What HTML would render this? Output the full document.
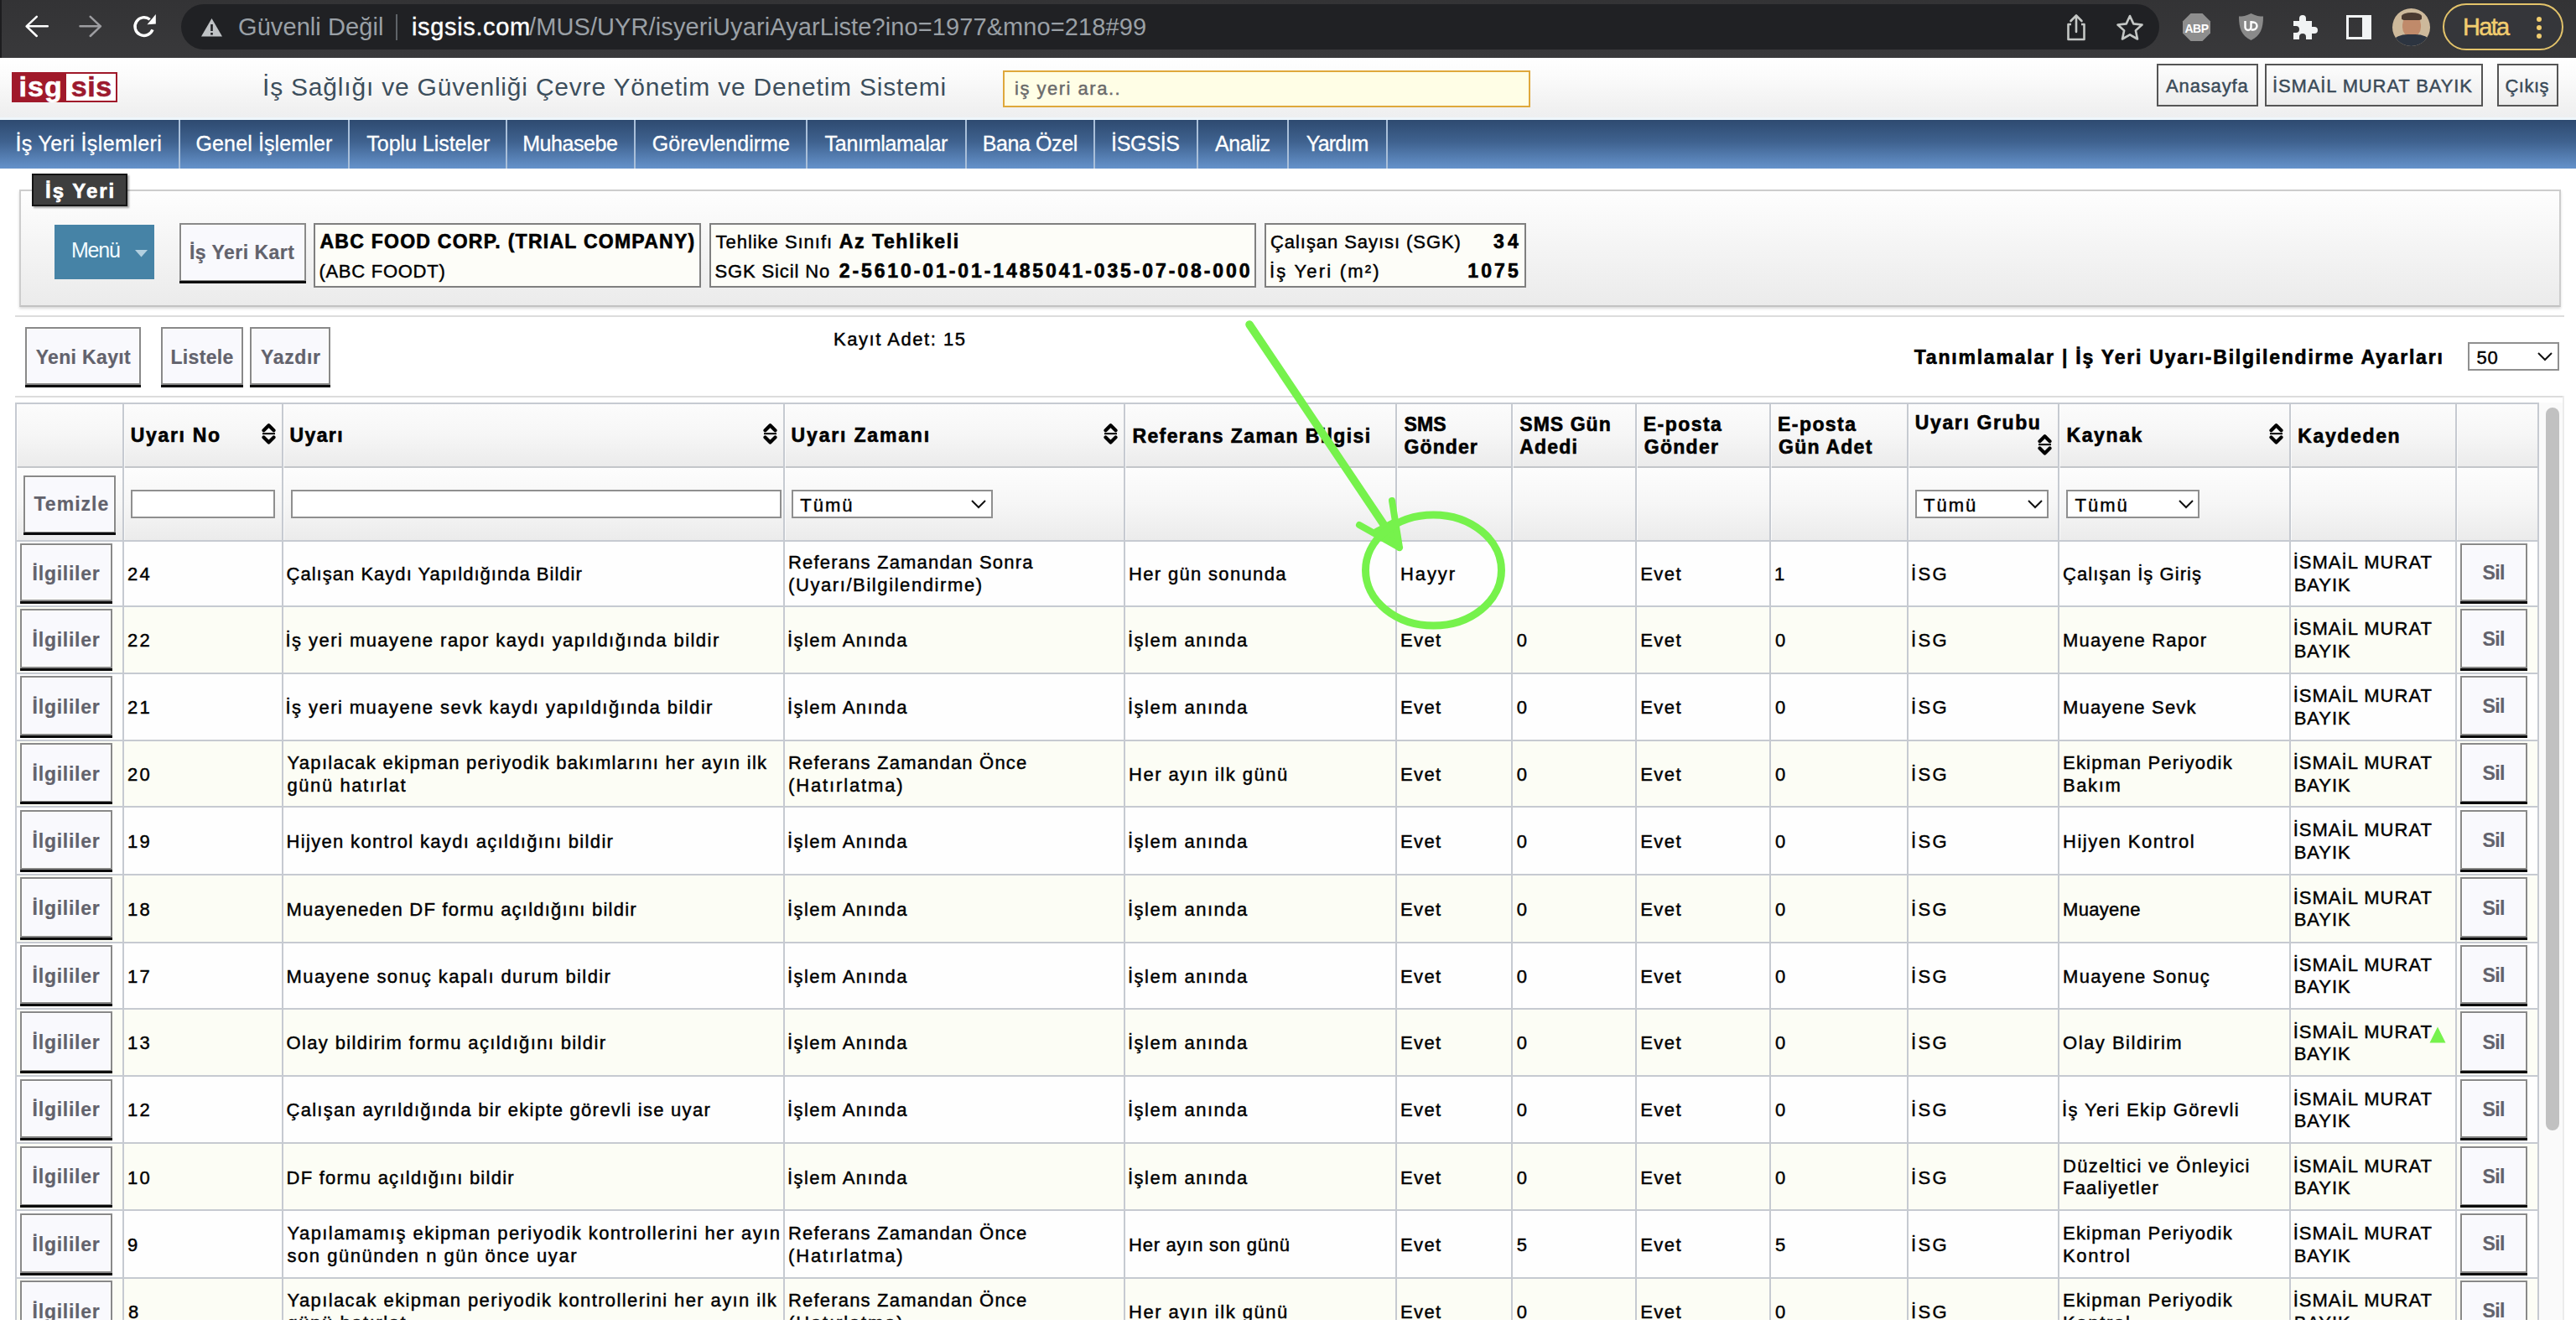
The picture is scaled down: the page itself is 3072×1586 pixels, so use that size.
<!DOCTYPE html>
<html><head><meta charset="utf-8"><title>isgsis</title>
<style>html,body{margin:0;padding:0;width:3072px;height:1586px;overflow:hidden;background:#fff;font-family:'Liberation Sans',sans-serif;}</style>
</head><body>
<div style="position:absolute;left:0px;top:0px;width:3072px;height:69px;background:linear-gradient(#333335,#39393b);"></div>
<div style="position:absolute;left:0px;top:0px;width:2px;height:69px;background:#1d1d1f;"></div>
<div style="position:absolute;left:216px;top:5px;width:2359px;height:54px;background:#202124;border-radius:27px;"></div>
<svg style="position:absolute;left:26px;top:14px" width="36" height="36" viewBox="0 0 36 36"><path d="M30.8 17.3H6M17.8 5.9L5.6 17.3l12.2 11.7" fill="none" stroke="#fff" stroke-width="2.5" stroke-linecap="round" stroke-linejoin="round"/></svg>
<svg style="position:absolute;left:90px;top:14px" width="36" height="36" viewBox="0 0 36 36"><path d="M5.5 17.3h24.5M17.7 5.9l12.2 11.4L17.7 29" fill="none" stroke="#9d9da1" stroke-width="2.5" stroke-linecap="round" stroke-linejoin="round"/></svg>
<svg style="position:absolute;left:154px;top:13px" width="36" height="36" viewBox="0 0 36 36"><path d="M24.7 10.3A10.8 10.8 0 1 0 27.95 22.3" fill="none" stroke="#fff" stroke-width="3.4"/><path d="M21.5 16.2L31.8 15.6 31.8 4z" fill="#fff"/></svg>
<svg style="position:absolute;left:239px;top:21px" width="27" height="23" viewBox="0 0 27 23"><path d="M13.5 1L26 22.5H1z" fill="#bfc2c5"/><rect x="12.2" y="8" width="2.6" height="8" fill="#202124"/><rect x="12.2" y="18" width="2.6" height="2.6" fill="#202124"/></svg>
<div style="position:absolute;left:284.00px;top:18.25px;font:29px/29px 'Liberation Sans', sans-serif;color:#9aa0a6;letter-spacing:0.081px;white-space:pre;">Güvenli Değil</div>
<div style="position:absolute;left:472px;top:17px;width:2px;height:31px;background:#5f6368;"></div>
<div style="position:absolute;left:491.00px;top:18.25px;font:29px/29px 'Liberation Sans', sans-serif;color:#ffffff;letter-spacing:0.644px;white-space:pre;-webkit-text-stroke:0.4px #fff;">isgsis.com</div>
<div style="position:absolute;left:631.00px;top:18.25px;font:29px/29px 'Liberation Sans', sans-serif;color:#9aa0a6;letter-spacing:0.101px;white-space:pre;">/MUS/UYR/isyeriUyariAyarListe?ino=1977&amp;mno=218#99</div>
<svg style="position:absolute;left:2460px;top:16px" width="32" height="34" viewBox="0 0 32 34"><path d="M10 13H6.5v18h19V13H22" fill="none" stroke="#c4c7c5" stroke-width="2.6" stroke-linejoin="round"/><path d="M16 22V3M9.5 9L16 2.5 22.5 9" fill="none" stroke="#c4c7c5" stroke-width="2.6" stroke-linecap="round" stroke-linejoin="round"/></svg>
<svg style="position:absolute;left:2522px;top:16px" width="36" height="34" viewBox="0 0 36 34"><path d="M18 3l4.3 9.4 10.2 1.1-7.6 6.9 2.1 10.1L18 25.4l-9 5.1 2.1-10.1-7.6-6.9 10.2-1.1z" fill="none" stroke="#c4c7c5" stroke-width="2.6" stroke-linejoin="round"/></svg>
<svg style="position:absolute;left:2602px;top:15px" width="35" height="35" viewBox="0 0 35 35"><path d="M10.5 1h14l9.5 9.5v14L24.5 34h-14L1 24.5v-14z" fill="#8e8e8e"/><text x="17.5" y="23.5" font-family="Liberation Sans" font-weight="bold" font-size="14" fill="#fff" text-anchor="middle" letter-spacing="-0.5">ABP</text></svg>
<svg style="position:absolute;left:2668px;top:15px" width="33" height="34" viewBox="0 0 33 34"><path d="M16.5 1C11 4 6 4.5 2 4.5c0 14 3 23 14.5 28.5C28 27.5 31 18.5 31 4.5 27 4.5 22 4 16.5 1z" fill="#8a8a8a"/><path d="M9.5 10v7.5a3.5 3.5 0 0 0 7 0V10" fill="none" stroke="#fff" stroke-width="2.4"/><path d="M16.5 11.5h2.5a4.5 4.5 0 0 1 0 9h-2.5" fill="none" stroke="#fff" stroke-width="2.4"/></svg>
<svg style="position:absolute;left:2732px;top:16px" width="33" height="32" viewBox="0 0 33 32"><path d="M3 9h7V6a4 4 0 0 1 8 0v3h7v7h3a4 4 0 0 1 0 8h-3v7H18v-3a4 4 0 0 0-8 0v3H3V23h3a4 4 0 0 0 0-8H3z" fill="#f1f3f4"/></svg>
<div style="position:absolute;left:2798px;top:18px;width:30px;height:29px;box-sizing:border-box;border:3px solid #f1f3f4;border-right-width:11px;"></div>
<div style="position:absolute;left:2853px;top:10px;width:45px;height:45px;border-radius:50%;overflow:hidden;background:#cdb99b;"><div style="position:absolute;left:12px;top:8px;width:22px;height:26px;border-radius:45%;background:#c08a6a;"></div><div style="position:absolute;left:11px;top:5px;width:24px;height:9px;border-radius:50% 50% 20% 20%;background:#4a3a30;"></div><div style="position:absolute;left:2px;top:31px;width:42px;height:20px;border-radius:40% 40% 0 0;background:#2c3440;"></div></div>
<div style="position:absolute;left:2913px;top:4px;width:144px;height:56px;box-sizing:border-box;border:2.5px solid #e3c36a;border-radius:28px;background:#35363a;"></div>
<div style="position:absolute;left:2937.00px;top:18.25px;font:29px/29px 'Liberation Sans', sans-serif;color:#f1cd6f;letter-spacing:-1.709px;white-space:pre;-webkit-text-stroke:0.5px #f1cd6f;">Hata</div>
<div style="position:absolute;left:3024.5px;top:19.5px;width:6.5px;height:6.5px;border-radius:50%;background:#f1cd6f;box-shadow:0 10px 0 #f1cd6f,0 20px 0 #f1cd6f"></div>
<div style="position:absolute;left:0px;top:69px;width:3072px;height:74px;background:linear-gradient(#ffffff 0%,#fbfbfb 30%,#f1f1f1 80%,#edeef0 100%);"></div>
<div style="position:absolute;left:0px;top:140px;width:3072px;height:3px;background:#eef6fb;"></div>
<div style="position:absolute;left:14px;top:86px;width:126px;height:35.599999999999994px;background:#a0192a;"></div>
<div style="position:absolute;left:79px;top:87.8px;width:59.400000000000006px;height:32.0px;background:#ffffff;"></div>
<div style="position:absolute;left:22.40px;top:85.52px;font:bold 34px/34px 'Liberation Sans', sans-serif;color:#ffffff;letter-spacing:1.122px;white-space:pre;-webkit-text-stroke:0.6px #ffffff;">isg</div>
<div style="position:absolute;left:84.80px;top:85.52px;font:bold 34px/34px 'Liberation Sans', sans-serif;color:#9c1a2e;letter-spacing:0.572px;white-space:pre;-webkit-text-stroke:0.6px #9c1a2e;">sis</div>
<div style="position:absolute;left:313.00px;top:89.41px;font:30px/30px 'Liberation Sans', sans-serif;color:#3c4e5c;letter-spacing:0.794px;white-space:pre;">İş Sağlığı ve Güvenliği Çevre Yönetim ve Denetim Sistemi</div>
<div style="position:absolute;left:1196px;top:84px;width:629px;height:44px;box-sizing:border-box;border:2px solid #dfa83c;background:#fffee6;"></div>
<div style="position:absolute;left:1210.00px;top:95.18px;font:22px/22px 'Liberation Sans', sans-serif;color:#6b6b6b;letter-spacing:1.502px;white-space:pre;-webkit-text-stroke:0.45px #6b6b6b;">iş yeri ara..</div>
<div style="position:absolute;left:2572px;top:76px;width:121px;height:51px;box-sizing:border-box;border:2px solid #555;background:linear-gradient(#fdfdfd,#ececec);"></div>
<div style="position:absolute;left:2583.00px;top:92.18px;font:22px/22px 'Liberation Sans', sans-serif;color:#3a4a58;letter-spacing:0.858px;white-space:pre;-webkit-text-stroke:0.45px #3a4a58;">Anasayfa</div>
<div style="position:absolute;left:2701px;top:76px;width:260px;height:51px;box-sizing:border-box;border:2px solid #555;background:linear-gradient(#fdfdfd,#ececec);"></div>
<div style="position:absolute;left:2710.00px;top:92.18px;font:22px/22px 'Liberation Sans', sans-serif;color:#3a4a58;letter-spacing:0.886px;white-space:pre;-webkit-text-stroke:0.45px #3a4a58;">İSMAİL MURAT BAYIK</div>
<div style="position:absolute;left:2978px;top:76px;width:73px;height:51px;box-sizing:border-box;border:2px solid #555;background:linear-gradient(#fdfdfd,#ececec);"></div>
<div style="position:absolute;left:2987.50px;top:92.18px;font:22px/22px 'Liberation Sans', sans-serif;color:#3a4a58;letter-spacing:0.472px;white-space:pre;-webkit-text-stroke:0.45px #3a4a58;">Çıkış</div>
<div style="position:absolute;left:0px;top:143px;width:3072px;height:58px;background:linear-gradient(#2e4a70 0%,#3f628f 45%,#6592cb 100%);"></div>
<div style="position:absolute;left:212.7px;top:143px;width:2.0px;height:58px;background:#a9bfd9;"></div>
<div style="position:absolute;left:415px;top:143px;width:2px;height:58px;background:#a9bfd9;"></div>
<div style="position:absolute;left:603px;top:143px;width:2px;height:58px;background:#a9bfd9;"></div>
<div style="position:absolute;left:756px;top:143px;width:2px;height:58px;background:#a9bfd9;"></div>
<div style="position:absolute;left:961px;top:143px;width:2px;height:58px;background:#a9bfd9;"></div>
<div style="position:absolute;left:1150.5px;top:143px;width:2.0px;height:58px;background:#a9bfd9;"></div>
<div style="position:absolute;left:1304px;top:143px;width:2px;height:58px;background:#a9bfd9;"></div>
<div style="position:absolute;left:1427px;top:143px;width:2px;height:58px;background:#a9bfd9;"></div>
<div style="position:absolute;left:1535px;top:143px;width:2px;height:58px;background:#a9bfd9;"></div>
<div style="position:absolute;left:1653px;top:143px;width:2px;height:58px;background:#a9bfd9;"></div>
<div style="position:absolute;left:18.40px;top:158.64px;font:25px/25px 'Liberation Sans', sans-serif;color:#ffffff;letter-spacing:0.387px;white-space:pre;-webkit-text-stroke:0.3px #fff;">İş Yeri İşlemleri</div>
<div style="position:absolute;left:233.50px;top:158.64px;font:25px/25px 'Liberation Sans', sans-serif;color:#ffffff;letter-spacing:0.127px;white-space:pre;-webkit-text-stroke:0.3px #fff;">Genel İşlemler</div>
<div style="position:absolute;left:437.30px;top:158.64px;font:25px/25px 'Liberation Sans', sans-serif;color:#ffffff;letter-spacing:-0.029px;white-space:pre;-webkit-text-stroke:0.3px #fff;">Toplu Listeler</div>
<div style="position:absolute;left:623.20px;top:158.64px;font:25px/25px 'Liberation Sans', sans-serif;color:#ffffff;letter-spacing:-0.435px;white-space:pre;-webkit-text-stroke:0.3px #fff;">Muhasebe</div>
<div style="position:absolute;left:777.80px;top:158.64px;font:25px/25px 'Liberation Sans', sans-serif;color:#ffffff;letter-spacing:0.004px;white-space:pre;-webkit-text-stroke:0.3px #fff;">Görevlendirme</div>
<div style="position:absolute;left:983.60px;top:158.64px;font:25px/25px 'Liberation Sans', sans-serif;color:#ffffff;letter-spacing:-0.293px;white-space:pre;-webkit-text-stroke:0.3px #fff;">Tanımlamalar</div>
<div style="position:absolute;left:1171.80px;top:158.64px;font:25px/25px 'Liberation Sans', sans-serif;color:#ffffff;letter-spacing:-0.410px;white-space:pre;-webkit-text-stroke:0.3px #fff;">Bana Özel</div>
<div style="position:absolute;left:1325.10px;top:158.64px;font:25px/25px 'Liberation Sans', sans-serif;color:#ffffff;letter-spacing:-0.297px;white-space:pre;-webkit-text-stroke:0.3px #fff;">İSGSİS</div>
<div style="position:absolute;left:1449.00px;top:158.64px;font:25px/25px 'Liberation Sans', sans-serif;color:#ffffff;letter-spacing:-0.398px;white-space:pre;-webkit-text-stroke:0.3px #fff;">Analiz</div>
<div style="position:absolute;left:1557.70px;top:158.64px;font:25px/25px 'Liberation Sans', sans-serif;color:#ffffff;letter-spacing:-0.820px;white-space:pre;-webkit-text-stroke:0.3px #fff;">Yardım</div>
<div style="position:absolute;left:23px;top:226px;width:3031px;height:140px;box-sizing:border-box;border:2px solid #cdcdcd;border-bottom-color:#c2c2c2;background:linear-gradient(#fefefe 0%,#f4f4f4 50%,#ebebeb 100%);box-shadow:0 2px 3px rgba(0,0,0,0.15);"></div>
<div style="position:absolute;left:38px;top:207px;width:114px;height:39px;box-sizing:border-box;border:2px solid #141414;background:#3e3e3e;box-shadow:2px 2px 2px rgba(0,0,0,0.35);"></div>
<div style="position:absolute;left:54.00px;top:215.78px;font:bold 24px/24px 'Liberation Sans', sans-serif;color:#ffffff;letter-spacing:1.991px;white-space:pre;-webkit-text-stroke:0.6px #ffffff;">İş Yeri</div>
<div style="position:absolute;left:65px;top:267.5px;width:119px;height:65.0px;background:#4683a6;"></div>
<div style="position:absolute;left:85.00px;top:286.14px;font:25px/25px 'Liberation Sans', sans-serif;color:#f2fbff;letter-spacing:-1.211px;white-space:pre;">Menü</div>
<svg style="position:absolute;left:160px;top:297px" width="17" height="10" viewBox="0 0 17 10"><path d="M1 1h15L8.5 9.5z" fill="#b3d0e0"/></svg>
<div style="position:absolute;left:214px;top:266px;width:150.5px;height:69.5px;box-sizing:border-box;border:2px solid #898989;background:#f9f9fd;box-shadow:inset 0 0 0 1px #ffffff;"></div>
<div style="position:absolute;left:214px;top:335px;width:150.5px;height:3px;background:#0b0b0b;"></div>
<div style="position:absolute;left:226.00px;top:289.93px;font:bold 23px/23px 'Liberation Sans', sans-serif;color:#62626c;letter-spacing:0.471px;white-space:pre;-webkit-text-stroke:0.6px #62626c;-webkit-text-stroke:0.2px #62626c;">İş Yeri Kart</div>
<div style="position:absolute;left:373.5px;top:266px;width:462.5px;height:77px;box-sizing:border-box;border:2px solid #7f7f7f;background:#fdfdf8;"></div>
<div style="position:absolute;left:381.40px;top:277.33px;font:bold 23px/23px 'Liberation Sans', sans-serif;color:#000;letter-spacing:1.265px;white-space:pre;-webkit-text-stroke:0.6px #000;">ABC FOOD CORP. (TRIAL COMPANY)</div>
<div style="position:absolute;left:380.40px;top:312.58px;font:22px/22px 'Liberation Sans', sans-serif;color:#000;letter-spacing:0.734px;white-space:pre;-webkit-text-stroke:0.45px #000;">(ABC FOODT)</div>
<div style="position:absolute;left:845.5px;top:266px;width:652.5px;height:77px;box-sizing:border-box;border:2px solid #7f7f7f;background:#fdfdf8;"></div>
<div style="position:absolute;left:853.50px;top:278.18px;font:22px/22px 'Liberation Sans', sans-serif;color:#000;letter-spacing:0.974px;white-space:pre;-webkit-text-stroke:0.45px #000;">Tehlike Sınıfı</div>
<div style="position:absolute;left:1000.70px;top:277.33px;font:bold 23px/23px 'Liberation Sans', sans-serif;color:#000;letter-spacing:1.597px;white-space:pre;-webkit-text-stroke:0.6px #000;">Az Tehlikeli</div>
<div style="position:absolute;left:852.50px;top:312.58px;font:22px/22px 'Liberation Sans', sans-serif;color:#000;letter-spacing:0.872px;white-space:pre;-webkit-text-stroke:0.45px #000;">SGK Sicil No</div>
<div style="position:absolute;left:1000.70px;top:311.73px;font:bold 23px/23px 'Liberation Sans', sans-serif;color:#000;letter-spacing:2.907px;white-space:pre;-webkit-text-stroke:0.6px #000;">2-5610-01-01-1485041-035-07-08-000</div>
<div style="position:absolute;left:1507.5px;top:266px;width:312.0px;height:77px;box-sizing:border-box;border:2px solid #7f7f7f;background:#fdfdf8;"></div>
<div style="position:absolute;left:1515.00px;top:278.18px;font:22px/22px 'Liberation Sans', sans-serif;color:#000;letter-spacing:0.940px;white-space:pre;-webkit-text-stroke:0.45px #000;">Çalışan Sayısı (SGK)</div>
<div style="position:absolute;left:1781.00px;top:277.33px;font:bold 23px/23px 'Liberation Sans', sans-serif;color:#000;letter-spacing:4.208px;white-space:pre;-webkit-text-stroke:0.6px #000;">34</div>
<div style="position:absolute;left:1514.00px;top:312.58px;font:22px/22px 'Liberation Sans', sans-serif;color:#000;letter-spacing:2.198px;white-space:pre;-webkit-text-stroke:0.45px #000;">İş Yeri (m²)</div>
<div style="position:absolute;left:1750.30px;top:311.73px;font:bold 23px/23px 'Liberation Sans', sans-serif;color:#000;letter-spacing:3.108px;white-space:pre;-webkit-text-stroke:0.6px #000;">1075</div>
<div style="position:absolute;left:18px;top:376px;width:3040px;height:2px;background:#dcdcdc;"></div>
<div style="position:absolute;left:30px;top:390px;width:138px;height:69.0px;box-sizing:border-box;border:2px solid #898989;background:#f9f9fd;box-shadow:inset 0 0 0 1px #ffffff;"></div>
<div style="position:absolute;left:30px;top:458.5px;width:138px;height:3.0px;background:#0b0b0b;"></div>
<div style="position:absolute;left:42.70px;top:414.73px;font:bold 23px/23px 'Liberation Sans', sans-serif;color:#62626c;letter-spacing:0.336px;white-space:pre;-webkit-text-stroke:0.6px #62626c;-webkit-text-stroke:0.2px #62626c;">Yeni Kayıt</div>
<div style="position:absolute;left:192px;top:390px;width:97.69999999999999px;height:69.0px;box-sizing:border-box;border:2px solid #898989;background:#f9f9fd;box-shadow:inset 0 0 0 1px #ffffff;"></div>
<div style="position:absolute;left:192px;top:458.5px;width:97.69999999999999px;height:3.0px;background:#0b0b0b;"></div>
<div style="position:absolute;left:203.50px;top:414.73px;font:bold 23px/23px 'Liberation Sans', sans-serif;color:#62626c;letter-spacing:0.321px;white-space:pre;-webkit-text-stroke:0.6px #62626c;-webkit-text-stroke:0.2px #62626c;">Listele</div>
<div style="position:absolute;left:298.3px;top:390px;width:96.19999999999999px;height:69.0px;box-sizing:border-box;border:2px solid #898989;background:#f9f9fd;box-shadow:inset 0 0 0 1px #ffffff;"></div>
<div style="position:absolute;left:298.3px;top:458.5px;width:96.19999999999999px;height:3.0px;background:#0b0b0b;"></div>
<div style="position:absolute;left:311.00px;top:414.73px;font:bold 23px/23px 'Liberation Sans', sans-serif;color:#62626c;letter-spacing:0.639px;white-space:pre;-webkit-text-stroke:0.6px #62626c;-webkit-text-stroke:0.2px #62626c;">Yazdır</div>
<div style="position:absolute;left:994.00px;top:393.88px;font:22px/22px 'Liberation Sans', sans-serif;color:#000;letter-spacing:1.541px;white-space:pre;-webkit-text-stroke:0.45px #000;">Kayıt Adet: 15</div>
<div style="position:absolute;left:2282.70px;top:415.33px;font:bold 23px/23px 'Liberation Sans', sans-serif;color:#000;letter-spacing:1.787px;white-space:pre;-webkit-text-stroke:0.6px #000;">Tanımlamalar | İş Yeri Uyarı-Bilgilendirme Ayarları</div>
<div style="position:absolute;left:2942.5px;top:408.3px;width:109.0px;height:33.69999999999999px;box-sizing:border-box;border:2px solid #8f8f8f;background:#fff;"></div>
<div style="position:absolute;left:2953.60px;top:416.18px;font:22px/22px 'Liberation Sans', sans-serif;color:#000;letter-spacing:0.765px;white-space:pre;-webkit-text-stroke:0.45px #000;">50</div>
<svg style="position:absolute;left:3025px;top:419px" width="20" height="12" viewBox="0 0 20 12"><path d="M2 2l8 8 8-8" fill="none" stroke="#111" stroke-width="2"/></svg>
<div style="position:absolute;left:18px;top:472px;width:3040px;height:2px;background:#dcdcdc;"></div>
<div style="position:absolute;left:0;top:0;width:3072px;height:1574px;overflow:hidden;">
<div style="position:absolute;left:19px;top:480.7px;width:3007.5px;height:76.30000000000001px;background:linear-gradient(#fcfcfc 0%,#f6f6f6 50%,#ebebeb 100%);"></div>
<div style="position:absolute;left:19px;top:557px;width:3007.5px;height:87.60000000000002px;background:linear-gradient(#fdfdfd 0%,#f6f6f6 50%,#ebebeb 100%);"></div>
<div style="position:absolute;left:19px;top:644.6px;width:3007.5px;height:77.89999999999998px;background:#fefefe;"></div>
<div style="position:absolute;left:19px;top:722.5px;width:3007.5px;height:80.20000000000005px;background:#fcfdf5;"></div>
<div style="position:absolute;left:19px;top:802.7px;width:3007.5px;height:79.79999999999995px;background:#fefefe;"></div>
<div style="position:absolute;left:19px;top:882.5px;width:3007.5px;height:79.89999999999998px;background:#fcfdf5;"></div>
<div style="position:absolute;left:19px;top:962.4px;width:3007.5px;height:80.39999999999998px;background:#fefefe;"></div>
<div style="position:absolute;left:19px;top:1042.8px;width:3007.5px;height:80.70000000000005px;background:#fcfdf5;"></div>
<div style="position:absolute;left:19px;top:1123.5px;width:3007.5px;height:79.40000000000009px;background:#fefefe;"></div>
<div style="position:absolute;left:19px;top:1202.9px;width:3007.5px;height:80.29999999999995px;background:#fcfdf5;"></div>
<div style="position:absolute;left:19px;top:1283.2px;width:3007.5px;height:79.79999999999995px;background:#fefefe;"></div>
<div style="position:absolute;left:19px;top:1363px;width:3007.5px;height:80.29999999999995px;background:#fcfdf5;"></div>
<div style="position:absolute;left:19px;top:1443.3px;width:3007.5px;height:80.29999999999995px;background:#fefefe;"></div>
<div style="position:absolute;left:19px;top:1523.6px;width:3007.5px;height:80.10000000000014px;background:#fcfdf5;"></div>
<div style="position:absolute;left:18px;top:479.7px;width:3009.5px;height:2.0px;background:#c6cad1;"></div>
<div style="position:absolute;left:18px;top:556px;width:3009.5px;height:2px;background:#c3c6ca;"></div>
<div style="position:absolute;left:18px;top:643.6px;width:3009.5px;height:2.0px;background:#c6cad1;"></div>
<div style="position:absolute;left:18px;top:721.5px;width:3009.5px;height:2.0px;background:#c6cad1;"></div>
<div style="position:absolute;left:18px;top:801.7px;width:3009.5px;height:2.0px;background:#c6cad1;"></div>
<div style="position:absolute;left:18px;top:881.5px;width:3009.5px;height:2.0px;background:#c6cad1;"></div>
<div style="position:absolute;left:18px;top:961.4px;width:3009.5px;height:2.0px;background:#c6cad1;"></div>
<div style="position:absolute;left:18px;top:1041.8px;width:3009.5px;height:2.0px;background:#c6cad1;"></div>
<div style="position:absolute;left:18px;top:1122.5px;width:3009.5px;height:2.0px;background:#c6cad1;"></div>
<div style="position:absolute;left:18px;top:1201.9px;width:3009.5px;height:2.0px;background:#c6cad1;"></div>
<div style="position:absolute;left:18px;top:1282.2px;width:3009.5px;height:2.0px;background:#c6cad1;"></div>
<div style="position:absolute;left:18px;top:1362px;width:3009.5px;height:2px;background:#c6cad1;"></div>
<div style="position:absolute;left:18px;top:1442.3px;width:3009.5px;height:2.0px;background:#c6cad1;"></div>
<div style="position:absolute;left:18px;top:1522.6px;width:3009.5px;height:2.0px;background:#c6cad1;"></div>
<div style="position:absolute;left:18px;top:1602.7px;width:3009.5px;height:2.0px;background:#c6cad1;"></div>
<div style="position:absolute;left:18px;top:479.7px;width:2px;height:1094.3px;background:#c6cad1;"></div>
<div style="position:absolute;left:146px;top:479.7px;width:2px;height:1094.3px;background:#c6cad1;"></div>
<div style="position:absolute;left:335.5px;top:479.7px;width:2.0px;height:1094.3px;background:#c6cad1;"></div>
<div style="position:absolute;left:934px;top:479.7px;width:2px;height:1094.3px;background:#c6cad1;"></div>
<div style="position:absolute;left:1340px;top:479.7px;width:2px;height:1094.3px;background:#c6cad1;"></div>
<div style="position:absolute;left:1663.5px;top:479.7px;width:2.0px;height:1094.3px;background:#c6cad1;"></div>
<div style="position:absolute;left:1802px;top:479.7px;width:2px;height:1094.3px;background:#c6cad1;"></div>
<div style="position:absolute;left:1950px;top:479.7px;width:2px;height:1094.3px;background:#c6cad1;"></div>
<div style="position:absolute;left:2110px;top:479.7px;width:2px;height:1094.3px;background:#c6cad1;"></div>
<div style="position:absolute;left:2274px;top:479.7px;width:2px;height:1094.3px;background:#c6cad1;"></div>
<div style="position:absolute;left:2454px;top:479.7px;width:2px;height:1094.3px;background:#c6cad1;"></div>
<div style="position:absolute;left:2730px;top:479.7px;width:2px;height:1094.3px;background:#c6cad1;"></div>
<div style="position:absolute;left:2927.5px;top:479.7px;width:2.0px;height:1094.3px;background:#c6cad1;"></div>
<div style="position:absolute;left:3025.5px;top:479.7px;width:2.0px;height:1094.3px;background:#c6cad1;"></div>
<div style="position:absolute;left:20px;top:481.7px;width:1px;height:161.90000000000003px;background:rgba(255,255,255,0.7);"></div>
<div style="position:absolute;left:148px;top:481.7px;width:1px;height:161.90000000000003px;background:rgba(255,255,255,0.7);"></div>
<div style="position:absolute;left:337.5px;top:481.7px;width:1.0px;height:161.90000000000003px;background:rgba(255,255,255,0.7);"></div>
<div style="position:absolute;left:936px;top:481.7px;width:1px;height:161.90000000000003px;background:rgba(255,255,255,0.7);"></div>
<div style="position:absolute;left:1342px;top:481.7px;width:1px;height:161.90000000000003px;background:rgba(255,255,255,0.7);"></div>
<div style="position:absolute;left:1665.5px;top:481.7px;width:1.0px;height:161.90000000000003px;background:rgba(255,255,255,0.7);"></div>
<div style="position:absolute;left:1804px;top:481.7px;width:1px;height:161.90000000000003px;background:rgba(255,255,255,0.7);"></div>
<div style="position:absolute;left:1952px;top:481.7px;width:1px;height:161.90000000000003px;background:rgba(255,255,255,0.7);"></div>
<div style="position:absolute;left:2112px;top:481.7px;width:1px;height:161.90000000000003px;background:rgba(255,255,255,0.7);"></div>
<div style="position:absolute;left:2276px;top:481.7px;width:1px;height:161.90000000000003px;background:rgba(255,255,255,0.7);"></div>
<div style="position:absolute;left:2456px;top:481.7px;width:1px;height:161.90000000000003px;background:rgba(255,255,255,0.7);"></div>
<div style="position:absolute;left:2732px;top:481.7px;width:1px;height:161.90000000000003px;background:rgba(255,255,255,0.7);"></div>
<div style="position:absolute;left:2929.5px;top:481.7px;width:1.0px;height:161.90000000000003px;background:rgba(255,255,255,0.7);"></div>
<div style="position:absolute;left:155.80px;top:507.63px;font:bold 23px/23px 'Liberation Sans', sans-serif;color:#000;letter-spacing:1.667px;white-space:pre;-webkit-text-stroke:0.6px #000;">Uyarı No</div>
<svg style="position:absolute;left:312px;top:504px" width="17" height="27" viewBox="0 0 17 27"><path d="M2.5 9.2L8.5 3.2l6 6" fill="none" stroke="#000" stroke-width="4.2" stroke-linecap="round" stroke-linejoin="round"/><rect x="1" y="12" width="15" height="2.2" fill="#1a1a1a"/><path d="M2.5 17.6l6 6 6-6" fill="none" stroke="#000" stroke-width="4.2" stroke-linecap="round" stroke-linejoin="round"/></svg>
<div style="position:absolute;left:345.50px;top:507.63px;font:bold 23px/23px 'Liberation Sans', sans-serif;color:#000;letter-spacing:1.381px;white-space:pre;-webkit-text-stroke:0.6px #000;">Uyarı</div>
<svg style="position:absolute;left:910px;top:504px" width="17" height="27" viewBox="0 0 17 27"><path d="M2.5 9.2L8.5 3.2l6 6" fill="none" stroke="#000" stroke-width="4.2" stroke-linecap="round" stroke-linejoin="round"/><rect x="1" y="12" width="15" height="2.2" fill="#1a1a1a"/><path d="M2.5 17.6l6 6 6-6" fill="none" stroke="#000" stroke-width="4.2" stroke-linecap="round" stroke-linejoin="round"/></svg>
<div style="position:absolute;left:943.60px;top:507.63px;font:bold 23px/23px 'Liberation Sans', sans-serif;color:#000;letter-spacing:1.822px;white-space:pre;-webkit-text-stroke:0.6px #000;">Uyarı Zamanı</div>
<svg style="position:absolute;left:1316px;top:504px" width="17" height="27" viewBox="0 0 17 27"><path d="M2.5 9.2L8.5 3.2l6 6" fill="none" stroke="#000" stroke-width="4.2" stroke-linecap="round" stroke-linejoin="round"/><rect x="1" y="12" width="15" height="2.2" fill="#1a1a1a"/><path d="M2.5 17.6l6 6 6-6" fill="none" stroke="#000" stroke-width="4.2" stroke-linecap="round" stroke-linejoin="round"/></svg>
<div style="position:absolute;left:1350.40px;top:508.93px;font:bold 23px/23px 'Liberation Sans', sans-serif;color:#000;letter-spacing:1.401px;white-space:pre;-webkit-text-stroke:0.6px #000;">Referans Zaman Bilgisi</div>
<div style="position:absolute;left:1674.50px;top:495.03px;font:bold 23px/23px 'Liberation Sans', sans-serif;color:#000;letter-spacing:0.174px;white-space:pre;-webkit-text-stroke:0.6px #000;">SMS</div>
<div style="position:absolute;left:1674.50px;top:522.13px;font:bold 23px/23px 'Liberation Sans', sans-serif;color:#000;letter-spacing:1.097px;white-space:pre;-webkit-text-stroke:0.6px #000;">Gönder</div>
<div style="position:absolute;left:1812.30px;top:495.03px;font:bold 23px/23px 'Liberation Sans', sans-serif;color:#000;letter-spacing:1.038px;white-space:pre;-webkit-text-stroke:0.6px #000;">SMS Gün</div>
<div style="position:absolute;left:1812.30px;top:522.13px;font:bold 23px/23px 'Liberation Sans', sans-serif;color:#000;letter-spacing:1.178px;white-space:pre;-webkit-text-stroke:0.6px #000;">Adedi</div>
<div style="position:absolute;left:1959.80px;top:495.03px;font:bold 23px/23px 'Liberation Sans', sans-serif;color:#000;letter-spacing:1.442px;white-space:pre;-webkit-text-stroke:0.6px #000;">E-posta</div>
<div style="position:absolute;left:1960.80px;top:522.13px;font:bold 23px/23px 'Liberation Sans', sans-serif;color:#000;letter-spacing:1.274px;white-space:pre;-webkit-text-stroke:0.6px #000;">Gönder</div>
<div style="position:absolute;left:2120.00px;top:495.03px;font:bold 23px/23px 'Liberation Sans', sans-serif;color:#000;letter-spacing:1.442px;white-space:pre;-webkit-text-stroke:0.6px #000;">E-posta</div>
<div style="position:absolute;left:2121.00px;top:522.13px;font:bold 23px/23px 'Liberation Sans', sans-serif;color:#000;letter-spacing:1.239px;white-space:pre;-webkit-text-stroke:0.6px #000;">Gün Adet</div>
<div style="position:absolute;left:2283.80px;top:493.03px;font:bold 23px/23px 'Liberation Sans', sans-serif;color:#000;letter-spacing:1.614px;white-space:pre;-webkit-text-stroke:0.6px #000;">Uyarı Grubu</div>
<svg style="position:absolute;left:2430px;top:517px" width="17" height="27" viewBox="0 0 17 27"><path d="M2.5 9.2L8.5 3.2l6 6" fill="none" stroke="#000" stroke-width="4.2" stroke-linecap="round" stroke-linejoin="round"/><rect x="1" y="12" width="15" height="2.2" fill="#1a1a1a"/><path d="M2.5 17.6l6 6 6-6" fill="none" stroke="#000" stroke-width="4.2" stroke-linecap="round" stroke-linejoin="round"/></svg>
<div style="position:absolute;left:2464.40px;top:507.63px;font:bold 23px/23px 'Liberation Sans', sans-serif;color:#000;letter-spacing:1.633px;white-space:pre;-webkit-text-stroke:0.6px #000;">Kaynak</div>
<svg style="position:absolute;left:2706px;top:504px" width="17" height="27" viewBox="0 0 17 27"><path d="M2.5 9.2L8.5 3.2l6 6" fill="none" stroke="#000" stroke-width="4.2" stroke-linecap="round" stroke-linejoin="round"/><rect x="1" y="12" width="15" height="2.2" fill="#1a1a1a"/><path d="M2.5 17.6l6 6 6-6" fill="none" stroke="#000" stroke-width="4.2" stroke-linecap="round" stroke-linejoin="round"/></svg>
<div style="position:absolute;left:2740.20px;top:509.33px;font:bold 23px/23px 'Liberation Sans', sans-serif;color:#000;letter-spacing:1.646px;white-space:pre;-webkit-text-stroke:0.6px #000;">Kaydeden</div>
<div style="position:absolute;left:28px;top:566.5px;width:110px;height:69.0px;box-sizing:border-box;border:2px solid #898989;background:#f9f9fd;box-shadow:inset 0 0 0 1px #ffffff;"></div>
<div style="position:absolute;left:28px;top:635px;width:110px;height:3px;background:#0b0b0b;"></div>
<div style="position:absolute;left:40.50px;top:590.33px;font:bold 23px/23px 'Liberation Sans', sans-serif;color:#62626c;letter-spacing:1.023px;white-space:pre;-webkit-text-stroke:0.6px #62626c;-webkit-text-stroke:0.2px #62626c;">Temizle</div>
<div style="position:absolute;left:156px;top:583.8px;width:172px;height:34.700000000000045px;box-sizing:border-box;border:2px solid #8f8f8f;background:#fff;"></div>
<div style="position:absolute;left:346.5px;top:583.8px;width:585.0px;height:34.700000000000045px;box-sizing:border-box;border:2px solid #8f8f8f;background:#fff;"></div>
<div style="position:absolute;left:944.3px;top:583.8px;width:239.70000000000005px;height:34.700000000000045px;box-sizing:border-box;border:2px solid #8f8f8f;background:#fff;"></div>
<div style="position:absolute;left:954.30px;top:592.18px;font:22px/22px 'Liberation Sans', sans-serif;color:#000;letter-spacing:2.000px;white-space:pre;-webkit-text-stroke:0.45px #000;">Tümü</div>
<svg style="position:absolute;left:1157px;top:595px" width="20" height="12" viewBox="0 0 20 12"><path d="M2 2l8 8 8-8" fill="none" stroke="#111" stroke-width="2"/></svg>
<div style="position:absolute;left:2284.3px;top:583.8px;width:159.19999999999982px;height:34.700000000000045px;box-sizing:border-box;border:2px solid #8f8f8f;background:#fff;"></div>
<div style="position:absolute;left:2294.00px;top:592.18px;font:22px/22px 'Liberation Sans', sans-serif;color:#000;letter-spacing:2.000px;white-space:pre;-webkit-text-stroke:0.45px #000;">Tümü</div>
<svg style="position:absolute;left:2416.5px;top:595px" width="20" height="12" viewBox="0 0 20 12"><path d="M2 2l8 8 8-8" fill="none" stroke="#111" stroke-width="2"/></svg>
<div style="position:absolute;left:2464.2px;top:583.8px;width:159.30000000000018px;height:34.700000000000045px;box-sizing:border-box;border:2px solid #8f8f8f;background:#fff;"></div>
<div style="position:absolute;left:2474.50px;top:592.18px;font:22px/22px 'Liberation Sans', sans-serif;color:#000;letter-spacing:2.000px;white-space:pre;-webkit-text-stroke:0.45px #000;">Tümü</div>
<svg style="position:absolute;left:2596.5px;top:595px" width="20" height="12" viewBox="0 0 20 12"><path d="M2 2l8 8 8-8" fill="none" stroke="#111" stroke-width="2"/></svg>
<div style="position:absolute;left:24px;top:648.1px;width:109.5px;height:68.89999999999998px;box-sizing:border-box;border:2px solid #898989;background:#f9f9fd;box-shadow:inset 0 0 0 1px #ffffff;"></div>
<div style="position:absolute;left:24px;top:716.5px;width:109.5px;height:3.0px;background:#0b0b0b;"></div>
<div style="position:absolute;left:38.60px;top:672.88px;font:bold 23px/23px 'Liberation Sans', sans-serif;color:#62626c;letter-spacing:0.752px;white-space:pre;-webkit-text-stroke:0.6px #62626c;-webkit-text-stroke:0.2px #62626c;">İlgililer</div>
<div style="position:absolute;left:152.00px;top:673.93px;font:22px/22px 'Liberation Sans', sans-serif;color:#000;letter-spacing:2.365px;white-space:pre;-webkit-text-stroke:0.45px #000;">24</div>
<div style="position:absolute;left:341.50px;top:673.93px;font:22px/22px 'Liberation Sans', sans-serif;color:#000;letter-spacing:1.023px;white-space:pre;-webkit-text-stroke:0.45px #000;">Çalışan Kaydı Yapıldığında Bildir</div>
<div style="position:absolute;left:940.00px;top:660.23px;font:22px/22px 'Liberation Sans', sans-serif;color:#000;letter-spacing:1.185px;white-space:pre;-webkit-text-stroke:0.45px #000;">Referans Zamandan Sonra</div>
<div style="position:absolute;left:940.00px;top:686.73px;font:22px/22px 'Liberation Sans', sans-serif;color:#000;letter-spacing:1.588px;white-space:pre;-webkit-text-stroke:0.45px #000;">(Uyarı/Bilgilendirme)</div>
<div style="position:absolute;left:1346.00px;top:673.93px;font:22px/22px 'Liberation Sans', sans-serif;color:#000;letter-spacing:1.332px;white-space:pre;-webkit-text-stroke:0.45px #000;">Her gün sonunda</div>
<div style="position:absolute;left:1670.00px;top:673.93px;font:22px/22px 'Liberation Sans', sans-serif;color:#000;letter-spacing:1.894px;white-space:pre;-webkit-text-stroke:0.45px #000;">Hayyr</div>
<div style="position:absolute;left:1956.30px;top:673.93px;font:22px/22px 'Liberation Sans', sans-serif;color:#000;letter-spacing:1.397px;white-space:pre;-webkit-text-stroke:0.45px #000;">Evet</div>
<div style="position:absolute;left:2116.00px;top:673.93px;font:22px/22px 'Liberation Sans', sans-serif;color:#000;letter-spacing:0.768px;white-space:pre;-webkit-text-stroke:0.45px #000;">1</div>
<div style="position:absolute;left:2279.00px;top:673.93px;font:22px/22px 'Liberation Sans', sans-serif;color:#000;letter-spacing:2.407px;white-space:pre;-webkit-text-stroke:0.45px #000;">İSG</div>
<div style="position:absolute;left:2460.00px;top:673.93px;font:22px/22px 'Liberation Sans', sans-serif;color:#000;letter-spacing:1.057px;white-space:pre;-webkit-text-stroke:0.45px #000;">Çalışan İş Giriş</div>
<div style="position:absolute;left:2734.70px;top:660.23px;font:22px/22px 'Liberation Sans', sans-serif;color:#000;letter-spacing:1.019px;white-space:pre;-webkit-text-stroke:0.45px #000;">İSMAİL MURAT</div>
<div style="position:absolute;left:2735.70px;top:686.73px;font:22px/22px 'Liberation Sans', sans-serif;color:#000;letter-spacing:0.975px;white-space:pre;-webkit-text-stroke:0.45px #000;">BAYIK</div>
<div style="position:absolute;left:2934px;top:648.1px;width:79.5px;height:68.89999999999998px;box-sizing:border-box;border:2px solid #898989;background:#f9f9fd;box-shadow:inset 0 0 0 1px #ffffff;"></div>
<div style="position:absolute;left:2934px;top:716.5px;width:79.5px;height:3.0px;background:#0b0b0b;"></div>
<div style="position:absolute;left:2960.60px;top:672.38px;font:bold 23px/23px 'Liberation Sans', sans-serif;color:#62626c;letter-spacing:-0.665px;white-space:pre;-webkit-text-stroke:0.6px #62626c;-webkit-text-stroke:0.2px #62626c;">Sil</div>
<div style="position:absolute;left:24px;top:726.0px;width:109.5px;height:71.20000000000005px;box-sizing:border-box;border:2px solid #898989;background:#f9f9fd;box-shadow:inset 0 0 0 1px #ffffff;"></div>
<div style="position:absolute;left:24px;top:796.7px;width:109.5px;height:3.0px;background:#0b0b0b;"></div>
<div style="position:absolute;left:38.60px;top:751.93px;font:bold 23px/23px 'Liberation Sans', sans-serif;color:#62626c;letter-spacing:0.752px;white-space:pre;-webkit-text-stroke:0.6px #62626c;-webkit-text-stroke:0.2px #62626c;">İlgililer</div>
<div style="position:absolute;left:152.00px;top:752.98px;font:22px/22px 'Liberation Sans', sans-serif;color:#000;letter-spacing:2.365px;white-space:pre;-webkit-text-stroke:0.45px #000;">22</div>
<div style="position:absolute;left:340.50px;top:752.98px;font:22px/22px 'Liberation Sans', sans-serif;color:#000;letter-spacing:1.450px;white-space:pre;-webkit-text-stroke:0.45px #000;">İş yeri muayene rapor kaydı yapıldığında bildir</div>
<div style="position:absolute;left:939.00px;top:752.98px;font:22px/22px 'Liberation Sans', sans-serif;color:#000;letter-spacing:1.385px;white-space:pre;-webkit-text-stroke:0.45px #000;">İşlem Anında</div>
<div style="position:absolute;left:1345.00px;top:752.98px;font:22px/22px 'Liberation Sans', sans-serif;color:#000;letter-spacing:1.479px;white-space:pre;-webkit-text-stroke:0.45px #000;">İşlem anında</div>
<div style="position:absolute;left:1670.00px;top:752.98px;font:22px/22px 'Liberation Sans', sans-serif;color:#000;letter-spacing:1.397px;white-space:pre;-webkit-text-stroke:0.45px #000;">Evet</div>
<div style="position:absolute;left:1808.70px;top:752.98px;font:22px/22px 'Liberation Sans', sans-serif;color:#000;letter-spacing:0.650px;white-space:pre;-webkit-text-stroke:0.45px #000;">0</div>
<div style="position:absolute;left:1956.30px;top:752.98px;font:22px/22px 'Liberation Sans', sans-serif;color:#000;letter-spacing:1.397px;white-space:pre;-webkit-text-stroke:0.45px #000;">Evet</div>
<div style="position:absolute;left:2117.00px;top:752.98px;font:22px/22px 'Liberation Sans', sans-serif;color:#000;letter-spacing:0.650px;white-space:pre;-webkit-text-stroke:0.45px #000;">0</div>
<div style="position:absolute;left:2279.00px;top:752.98px;font:22px/22px 'Liberation Sans', sans-serif;color:#000;letter-spacing:2.407px;white-space:pre;-webkit-text-stroke:0.45px #000;">İSG</div>
<div style="position:absolute;left:2460.00px;top:752.98px;font:22px/22px 'Liberation Sans', sans-serif;color:#000;letter-spacing:1.208px;white-space:pre;-webkit-text-stroke:0.45px #000;">Muayene Rapor</div>
<div style="position:absolute;left:2734.70px;top:739.28px;font:22px/22px 'Liberation Sans', sans-serif;color:#000;letter-spacing:1.019px;white-space:pre;-webkit-text-stroke:0.45px #000;">İSMAİL MURAT</div>
<div style="position:absolute;left:2735.70px;top:765.78px;font:22px/22px 'Liberation Sans', sans-serif;color:#000;letter-spacing:0.975px;white-space:pre;-webkit-text-stroke:0.45px #000;">BAYIK</div>
<div style="position:absolute;left:2934px;top:726.0px;width:79.5px;height:71.20000000000005px;box-sizing:border-box;border:2px solid #898989;background:#f9f9fd;box-shadow:inset 0 0 0 1px #ffffff;"></div>
<div style="position:absolute;left:2934px;top:796.7px;width:79.5px;height:3.0px;background:#0b0b0b;"></div>
<div style="position:absolute;left:2960.60px;top:751.43px;font:bold 23px/23px 'Liberation Sans', sans-serif;color:#62626c;letter-spacing:-0.665px;white-space:pre;-webkit-text-stroke:0.6px #62626c;-webkit-text-stroke:0.2px #62626c;">Sil</div>
<div style="position:absolute;left:24px;top:806.2px;width:109.5px;height:70.79999999999995px;box-sizing:border-box;border:2px solid #898989;background:#f9f9fd;box-shadow:inset 0 0 0 1px #ffffff;"></div>
<div style="position:absolute;left:24px;top:876.5px;width:109.5px;height:3.0px;background:#0b0b0b;"></div>
<div style="position:absolute;left:38.60px;top:831.93px;font:bold 23px/23px 'Liberation Sans', sans-serif;color:#62626c;letter-spacing:0.752px;white-space:pre;-webkit-text-stroke:0.6px #62626c;-webkit-text-stroke:0.2px #62626c;">İlgililer</div>
<div style="position:absolute;left:152.00px;top:832.98px;font:22px/22px 'Liberation Sans', sans-serif;color:#000;letter-spacing:2.365px;white-space:pre;-webkit-text-stroke:0.45px #000;">21</div>
<div style="position:absolute;left:340.50px;top:832.98px;font:22px/22px 'Liberation Sans', sans-serif;color:#000;letter-spacing:1.445px;white-space:pre;-webkit-text-stroke:0.45px #000;">İş yeri muayene sevk kaydı yapıldığında bildir</div>
<div style="position:absolute;left:939.00px;top:832.98px;font:22px/22px 'Liberation Sans', sans-serif;color:#000;letter-spacing:1.385px;white-space:pre;-webkit-text-stroke:0.45px #000;">İşlem Anında</div>
<div style="position:absolute;left:1345.00px;top:832.98px;font:22px/22px 'Liberation Sans', sans-serif;color:#000;letter-spacing:1.479px;white-space:pre;-webkit-text-stroke:0.45px #000;">İşlem anında</div>
<div style="position:absolute;left:1670.00px;top:832.98px;font:22px/22px 'Liberation Sans', sans-serif;color:#000;letter-spacing:1.397px;white-space:pre;-webkit-text-stroke:0.45px #000;">Evet</div>
<div style="position:absolute;left:1808.70px;top:832.98px;font:22px/22px 'Liberation Sans', sans-serif;color:#000;letter-spacing:0.650px;white-space:pre;-webkit-text-stroke:0.45px #000;">0</div>
<div style="position:absolute;left:1956.30px;top:832.98px;font:22px/22px 'Liberation Sans', sans-serif;color:#000;letter-spacing:1.397px;white-space:pre;-webkit-text-stroke:0.45px #000;">Evet</div>
<div style="position:absolute;left:2117.00px;top:832.98px;font:22px/22px 'Liberation Sans', sans-serif;color:#000;letter-spacing:0.650px;white-space:pre;-webkit-text-stroke:0.45px #000;">0</div>
<div style="position:absolute;left:2279.00px;top:832.98px;font:22px/22px 'Liberation Sans', sans-serif;color:#000;letter-spacing:2.407px;white-space:pre;-webkit-text-stroke:0.45px #000;">İSG</div>
<div style="position:absolute;left:2460.00px;top:832.98px;font:22px/22px 'Liberation Sans', sans-serif;color:#000;letter-spacing:1.180px;white-space:pre;-webkit-text-stroke:0.45px #000;">Muayene Sevk</div>
<div style="position:absolute;left:2734.70px;top:819.28px;font:22px/22px 'Liberation Sans', sans-serif;color:#000;letter-spacing:1.019px;white-space:pre;-webkit-text-stroke:0.45px #000;">İSMAİL MURAT</div>
<div style="position:absolute;left:2735.70px;top:845.78px;font:22px/22px 'Liberation Sans', sans-serif;color:#000;letter-spacing:0.975px;white-space:pre;-webkit-text-stroke:0.45px #000;">BAYIK</div>
<div style="position:absolute;left:2934px;top:806.2px;width:79.5px;height:70.79999999999995px;box-sizing:border-box;border:2px solid #898989;background:#f9f9fd;box-shadow:inset 0 0 0 1px #ffffff;"></div>
<div style="position:absolute;left:2934px;top:876.5px;width:79.5px;height:3.0px;background:#0b0b0b;"></div>
<div style="position:absolute;left:2960.60px;top:831.43px;font:bold 23px/23px 'Liberation Sans', sans-serif;color:#62626c;letter-spacing:-0.665px;white-space:pre;-webkit-text-stroke:0.6px #62626c;-webkit-text-stroke:0.2px #62626c;">Sil</div>
<div style="position:absolute;left:24px;top:886.0px;width:109.5px;height:70.89999999999998px;box-sizing:border-box;border:2px solid #898989;background:#f9f9fd;box-shadow:inset 0 0 0 1px #ffffff;"></div>
<div style="position:absolute;left:24px;top:956.4px;width:109.5px;height:3.0px;background:#0b0b0b;"></div>
<div style="position:absolute;left:38.60px;top:911.78px;font:bold 23px/23px 'Liberation Sans', sans-serif;color:#62626c;letter-spacing:0.752px;white-space:pre;-webkit-text-stroke:0.6px #62626c;-webkit-text-stroke:0.2px #62626c;">İlgililer</div>
<div style="position:absolute;left:152.00px;top:912.83px;font:22px/22px 'Liberation Sans', sans-serif;color:#000;letter-spacing:2.365px;white-space:pre;-webkit-text-stroke:0.45px #000;">20</div>
<div style="position:absolute;left:342.50px;top:899.13px;font:22px/22px 'Liberation Sans', sans-serif;color:#000;letter-spacing:1.290px;white-space:pre;-webkit-text-stroke:0.45px #000;">Yapılacak ekipman periyodik bakımlarını her ayın ilk</div>
<div style="position:absolute;left:342.50px;top:925.63px;font:22px/22px 'Liberation Sans', sans-serif;color:#000;letter-spacing:1.567px;white-space:pre;-webkit-text-stroke:0.45px #000;">günü hatırlat</div>
<div style="position:absolute;left:940.00px;top:899.13px;font:22px/22px 'Liberation Sans', sans-serif;color:#000;letter-spacing:1.190px;white-space:pre;-webkit-text-stroke:0.45px #000;">Referans Zamandan Önce</div>
<div style="position:absolute;left:940.00px;top:925.63px;font:22px/22px 'Liberation Sans', sans-serif;color:#000;letter-spacing:1.864px;white-space:pre;-webkit-text-stroke:0.45px #000;">(Hatırlatma)</div>
<div style="position:absolute;left:1346.00px;top:912.83px;font:22px/22px 'Liberation Sans', sans-serif;color:#000;letter-spacing:1.509px;white-space:pre;-webkit-text-stroke:0.45px #000;">Her ayın ilk günü</div>
<div style="position:absolute;left:1670.00px;top:912.83px;font:22px/22px 'Liberation Sans', sans-serif;color:#000;letter-spacing:1.397px;white-space:pre;-webkit-text-stroke:0.45px #000;">Evet</div>
<div style="position:absolute;left:1808.70px;top:912.83px;font:22px/22px 'Liberation Sans', sans-serif;color:#000;letter-spacing:0.650px;white-space:pre;-webkit-text-stroke:0.45px #000;">0</div>
<div style="position:absolute;left:1956.30px;top:912.83px;font:22px/22px 'Liberation Sans', sans-serif;color:#000;letter-spacing:1.397px;white-space:pre;-webkit-text-stroke:0.45px #000;">Evet</div>
<div style="position:absolute;left:2117.00px;top:912.83px;font:22px/22px 'Liberation Sans', sans-serif;color:#000;letter-spacing:0.650px;white-space:pre;-webkit-text-stroke:0.45px #000;">0</div>
<div style="position:absolute;left:2279.00px;top:912.83px;font:22px/22px 'Liberation Sans', sans-serif;color:#000;letter-spacing:2.407px;white-space:pre;-webkit-text-stroke:0.45px #000;">İSG</div>
<div style="position:absolute;left:2460.00px;top:899.13px;font:22px/22px 'Liberation Sans', sans-serif;color:#000;letter-spacing:1.220px;white-space:pre;-webkit-text-stroke:0.45px #000;">Ekipman Periyodik</div>
<div style="position:absolute;left:2460.00px;top:925.63px;font:22px/22px 'Liberation Sans', sans-serif;color:#000;letter-spacing:1.595px;white-space:pre;-webkit-text-stroke:0.45px #000;">Bakım</div>
<div style="position:absolute;left:2734.70px;top:899.13px;font:22px/22px 'Liberation Sans', sans-serif;color:#000;letter-spacing:1.019px;white-space:pre;-webkit-text-stroke:0.45px #000;">İSMAİL MURAT</div>
<div style="position:absolute;left:2735.70px;top:925.63px;font:22px/22px 'Liberation Sans', sans-serif;color:#000;letter-spacing:0.975px;white-space:pre;-webkit-text-stroke:0.45px #000;">BAYIK</div>
<div style="position:absolute;left:2934px;top:886.0px;width:79.5px;height:70.89999999999998px;box-sizing:border-box;border:2px solid #898989;background:#f9f9fd;box-shadow:inset 0 0 0 1px #ffffff;"></div>
<div style="position:absolute;left:2934px;top:956.4px;width:79.5px;height:3.0px;background:#0b0b0b;"></div>
<div style="position:absolute;left:2960.60px;top:911.28px;font:bold 23px/23px 'Liberation Sans', sans-serif;color:#62626c;letter-spacing:-0.665px;white-space:pre;-webkit-text-stroke:0.6px #62626c;-webkit-text-stroke:0.2px #62626c;">Sil</div>
<div style="position:absolute;left:24px;top:965.9px;width:109.5px;height:71.39999999999998px;box-sizing:border-box;border:2px solid #898989;background:#f9f9fd;box-shadow:inset 0 0 0 1px #ffffff;"></div>
<div style="position:absolute;left:24px;top:1036.8px;width:109.5px;height:3.0px;background:#0b0b0b;"></div>
<div style="position:absolute;left:38.60px;top:991.93px;font:bold 23px/23px 'Liberation Sans', sans-serif;color:#62626c;letter-spacing:0.752px;white-space:pre;-webkit-text-stroke:0.6px #62626c;-webkit-text-stroke:0.2px #62626c;">İlgililer</div>
<div style="position:absolute;left:152.00px;top:992.98px;font:22px/22px 'Liberation Sans', sans-serif;color:#000;letter-spacing:2.365px;white-space:pre;-webkit-text-stroke:0.45px #000;">19</div>
<div style="position:absolute;left:341.50px;top:992.98px;font:22px/22px 'Liberation Sans', sans-serif;color:#000;letter-spacing:1.338px;white-space:pre;-webkit-text-stroke:0.45px #000;">Hijyen kontrol kaydı açıldığını bildir</div>
<div style="position:absolute;left:939.00px;top:992.98px;font:22px/22px 'Liberation Sans', sans-serif;color:#000;letter-spacing:1.385px;white-space:pre;-webkit-text-stroke:0.45px #000;">İşlem Anında</div>
<div style="position:absolute;left:1345.00px;top:992.98px;font:22px/22px 'Liberation Sans', sans-serif;color:#000;letter-spacing:1.479px;white-space:pre;-webkit-text-stroke:0.45px #000;">İşlem anında</div>
<div style="position:absolute;left:1670.00px;top:992.98px;font:22px/22px 'Liberation Sans', sans-serif;color:#000;letter-spacing:1.397px;white-space:pre;-webkit-text-stroke:0.45px #000;">Evet</div>
<div style="position:absolute;left:1808.70px;top:992.98px;font:22px/22px 'Liberation Sans', sans-serif;color:#000;letter-spacing:0.650px;white-space:pre;-webkit-text-stroke:0.45px #000;">0</div>
<div style="position:absolute;left:1956.30px;top:992.98px;font:22px/22px 'Liberation Sans', sans-serif;color:#000;letter-spacing:1.397px;white-space:pre;-webkit-text-stroke:0.45px #000;">Evet</div>
<div style="position:absolute;left:2117.00px;top:992.98px;font:22px/22px 'Liberation Sans', sans-serif;color:#000;letter-spacing:0.650px;white-space:pre;-webkit-text-stroke:0.45px #000;">0</div>
<div style="position:absolute;left:2279.00px;top:992.98px;font:22px/22px 'Liberation Sans', sans-serif;color:#000;letter-spacing:2.407px;white-space:pre;-webkit-text-stroke:0.45px #000;">İSG</div>
<div style="position:absolute;left:2460.00px;top:992.98px;font:22px/22px 'Liberation Sans', sans-serif;color:#000;letter-spacing:1.510px;white-space:pre;-webkit-text-stroke:0.45px #000;">Hijyen Kontrol</div>
<div style="position:absolute;left:2734.70px;top:979.28px;font:22px/22px 'Liberation Sans', sans-serif;color:#000;letter-spacing:1.019px;white-space:pre;-webkit-text-stroke:0.45px #000;">İSMAİL MURAT</div>
<div style="position:absolute;left:2735.70px;top:1005.78px;font:22px/22px 'Liberation Sans', sans-serif;color:#000;letter-spacing:0.975px;white-space:pre;-webkit-text-stroke:0.45px #000;">BAYIK</div>
<div style="position:absolute;left:2934px;top:965.9px;width:79.5px;height:71.39999999999998px;box-sizing:border-box;border:2px solid #898989;background:#f9f9fd;box-shadow:inset 0 0 0 1px #ffffff;"></div>
<div style="position:absolute;left:2934px;top:1036.8px;width:79.5px;height:3.0px;background:#0b0b0b;"></div>
<div style="position:absolute;left:2960.60px;top:991.43px;font:bold 23px/23px 'Liberation Sans', sans-serif;color:#62626c;letter-spacing:-0.665px;white-space:pre;-webkit-text-stroke:0.6px #62626c;-webkit-text-stroke:0.2px #62626c;">Sil</div>
<div style="position:absolute;left:24px;top:1046.3px;width:109.5px;height:71.70000000000005px;box-sizing:border-box;border:2px solid #898989;background:#f9f9fd;box-shadow:inset 0 0 0 1px #ffffff;"></div>
<div style="position:absolute;left:24px;top:1117.5px;width:109.5px;height:3.0px;background:#0b0b0b;"></div>
<div style="position:absolute;left:38.60px;top:1072.48px;font:bold 23px/23px 'Liberation Sans', sans-serif;color:#62626c;letter-spacing:0.752px;white-space:pre;-webkit-text-stroke:0.6px #62626c;-webkit-text-stroke:0.2px #62626c;">İlgililer</div>
<div style="position:absolute;left:152.00px;top:1073.53px;font:22px/22px 'Liberation Sans', sans-serif;color:#000;letter-spacing:2.365px;white-space:pre;-webkit-text-stroke:0.45px #000;">18</div>
<div style="position:absolute;left:341.50px;top:1073.53px;font:22px/22px 'Liberation Sans', sans-serif;color:#000;letter-spacing:1.227px;white-space:pre;-webkit-text-stroke:0.45px #000;">Muayeneden DF formu açıldığını bildir</div>
<div style="position:absolute;left:939.00px;top:1073.53px;font:22px/22px 'Liberation Sans', sans-serif;color:#000;letter-spacing:1.385px;white-space:pre;-webkit-text-stroke:0.45px #000;">İşlem Anında</div>
<div style="position:absolute;left:1345.00px;top:1073.53px;font:22px/22px 'Liberation Sans', sans-serif;color:#000;letter-spacing:1.479px;white-space:pre;-webkit-text-stroke:0.45px #000;">İşlem anında</div>
<div style="position:absolute;left:1670.00px;top:1073.53px;font:22px/22px 'Liberation Sans', sans-serif;color:#000;letter-spacing:1.397px;white-space:pre;-webkit-text-stroke:0.45px #000;">Evet</div>
<div style="position:absolute;left:1808.70px;top:1073.53px;font:22px/22px 'Liberation Sans', sans-serif;color:#000;letter-spacing:0.650px;white-space:pre;-webkit-text-stroke:0.45px #000;">0</div>
<div style="position:absolute;left:1956.30px;top:1073.53px;font:22px/22px 'Liberation Sans', sans-serif;color:#000;letter-spacing:1.397px;white-space:pre;-webkit-text-stroke:0.45px #000;">Evet</div>
<div style="position:absolute;left:2117.00px;top:1073.53px;font:22px/22px 'Liberation Sans', sans-serif;color:#000;letter-spacing:0.650px;white-space:pre;-webkit-text-stroke:0.45px #000;">0</div>
<div style="position:absolute;left:2279.00px;top:1073.53px;font:22px/22px 'Liberation Sans', sans-serif;color:#000;letter-spacing:2.407px;white-space:pre;-webkit-text-stroke:0.45px #000;">İSG</div>
<div style="position:absolute;left:2460.00px;top:1073.53px;font:22px/22px 'Liberation Sans', sans-serif;color:#000;letter-spacing:0.310px;white-space:pre;-webkit-text-stroke:0.45px #000;">Muayene</div>
<div style="position:absolute;left:2734.70px;top:1059.83px;font:22px/22px 'Liberation Sans', sans-serif;color:#000;letter-spacing:1.019px;white-space:pre;-webkit-text-stroke:0.45px #000;">İSMAİL MURAT</div>
<div style="position:absolute;left:2735.70px;top:1086.33px;font:22px/22px 'Liberation Sans', sans-serif;color:#000;letter-spacing:0.975px;white-space:pre;-webkit-text-stroke:0.45px #000;">BAYIK</div>
<div style="position:absolute;left:2934px;top:1046.3px;width:79.5px;height:71.70000000000005px;box-sizing:border-box;border:2px solid #898989;background:#f9f9fd;box-shadow:inset 0 0 0 1px #ffffff;"></div>
<div style="position:absolute;left:2934px;top:1117.5px;width:79.5px;height:3.0px;background:#0b0b0b;"></div>
<div style="position:absolute;left:2960.60px;top:1071.98px;font:bold 23px/23px 'Liberation Sans', sans-serif;color:#62626c;letter-spacing:-0.665px;white-space:pre;-webkit-text-stroke:0.6px #62626c;-webkit-text-stroke:0.2px #62626c;">Sil</div>
<div style="position:absolute;left:24px;top:1127.0px;width:109.5px;height:70.40000000000009px;box-sizing:border-box;border:2px solid #898989;background:#f9f9fd;box-shadow:inset 0 0 0 1px #ffffff;"></div>
<div style="position:absolute;left:24px;top:1196.9px;width:109.5px;height:3.0px;background:#0b0b0b;"></div>
<div style="position:absolute;left:38.60px;top:1152.53px;font:bold 23px/23px 'Liberation Sans', sans-serif;color:#62626c;letter-spacing:0.752px;white-space:pre;-webkit-text-stroke:0.6px #62626c;-webkit-text-stroke:0.2px #62626c;">İlgililer</div>
<div style="position:absolute;left:152.00px;top:1153.58px;font:22px/22px 'Liberation Sans', sans-serif;color:#000;letter-spacing:2.365px;white-space:pre;-webkit-text-stroke:0.45px #000;">17</div>
<div style="position:absolute;left:341.50px;top:1153.58px;font:22px/22px 'Liberation Sans', sans-serif;color:#000;letter-spacing:1.414px;white-space:pre;-webkit-text-stroke:0.45px #000;">Muayene sonuç kapalı durum bildir</div>
<div style="position:absolute;left:939.00px;top:1153.58px;font:22px/22px 'Liberation Sans', sans-serif;color:#000;letter-spacing:1.385px;white-space:pre;-webkit-text-stroke:0.45px #000;">İşlem Anında</div>
<div style="position:absolute;left:1345.00px;top:1153.58px;font:22px/22px 'Liberation Sans', sans-serif;color:#000;letter-spacing:1.479px;white-space:pre;-webkit-text-stroke:0.45px #000;">İşlem anında</div>
<div style="position:absolute;left:1670.00px;top:1153.58px;font:22px/22px 'Liberation Sans', sans-serif;color:#000;letter-spacing:1.397px;white-space:pre;-webkit-text-stroke:0.45px #000;">Evet</div>
<div style="position:absolute;left:1808.70px;top:1153.58px;font:22px/22px 'Liberation Sans', sans-serif;color:#000;letter-spacing:0.650px;white-space:pre;-webkit-text-stroke:0.45px #000;">0</div>
<div style="position:absolute;left:1956.30px;top:1153.58px;font:22px/22px 'Liberation Sans', sans-serif;color:#000;letter-spacing:1.397px;white-space:pre;-webkit-text-stroke:0.45px #000;">Evet</div>
<div style="position:absolute;left:2117.00px;top:1153.58px;font:22px/22px 'Liberation Sans', sans-serif;color:#000;letter-spacing:0.650px;white-space:pre;-webkit-text-stroke:0.45px #000;">0</div>
<div style="position:absolute;left:2279.00px;top:1153.58px;font:22px/22px 'Liberation Sans', sans-serif;color:#000;letter-spacing:2.407px;white-space:pre;-webkit-text-stroke:0.45px #000;">İSG</div>
<div style="position:absolute;left:2460.00px;top:1153.58px;font:22px/22px 'Liberation Sans', sans-serif;color:#000;letter-spacing:1.309px;white-space:pre;-webkit-text-stroke:0.45px #000;">Muayene Sonuç</div>
<div style="position:absolute;left:2734.70px;top:1139.88px;font:22px/22px 'Liberation Sans', sans-serif;color:#000;letter-spacing:1.019px;white-space:pre;-webkit-text-stroke:0.45px #000;">İSMAİL MURAT</div>
<div style="position:absolute;left:2735.70px;top:1166.38px;font:22px/22px 'Liberation Sans', sans-serif;color:#000;letter-spacing:0.975px;white-space:pre;-webkit-text-stroke:0.45px #000;">BAYIK</div>
<div style="position:absolute;left:2934px;top:1127.0px;width:79.5px;height:70.40000000000009px;box-sizing:border-box;border:2px solid #898989;background:#f9f9fd;box-shadow:inset 0 0 0 1px #ffffff;"></div>
<div style="position:absolute;left:2934px;top:1196.9px;width:79.5px;height:3.0px;background:#0b0b0b;"></div>
<div style="position:absolute;left:2960.60px;top:1152.03px;font:bold 23px/23px 'Liberation Sans', sans-serif;color:#62626c;letter-spacing:-0.665px;white-space:pre;-webkit-text-stroke:0.6px #62626c;-webkit-text-stroke:0.2px #62626c;">Sil</div>
<div style="position:absolute;left:24px;top:1206.4px;width:109.5px;height:71.29999999999995px;box-sizing:border-box;border:2px solid #898989;background:#f9f9fd;box-shadow:inset 0 0 0 1px #ffffff;"></div>
<div style="position:absolute;left:24px;top:1277.2px;width:109.5px;height:3.0px;background:#0b0b0b;"></div>
<div style="position:absolute;left:38.60px;top:1232.38px;font:bold 23px/23px 'Liberation Sans', sans-serif;color:#62626c;letter-spacing:0.752px;white-space:pre;-webkit-text-stroke:0.6px #62626c;-webkit-text-stroke:0.2px #62626c;">İlgililer</div>
<div style="position:absolute;left:152.00px;top:1233.43px;font:22px/22px 'Liberation Sans', sans-serif;color:#000;letter-spacing:2.365px;white-space:pre;-webkit-text-stroke:0.45px #000;">13</div>
<div style="position:absolute;left:341.50px;top:1233.43px;font:22px/22px 'Liberation Sans', sans-serif;color:#000;letter-spacing:1.367px;white-space:pre;-webkit-text-stroke:0.45px #000;">Olay bildirim formu açıldığını bildir</div>
<div style="position:absolute;left:939.00px;top:1233.43px;font:22px/22px 'Liberation Sans', sans-serif;color:#000;letter-spacing:1.385px;white-space:pre;-webkit-text-stroke:0.45px #000;">İşlem Anında</div>
<div style="position:absolute;left:1345.00px;top:1233.43px;font:22px/22px 'Liberation Sans', sans-serif;color:#000;letter-spacing:1.479px;white-space:pre;-webkit-text-stroke:0.45px #000;">İşlem anında</div>
<div style="position:absolute;left:1670.00px;top:1233.43px;font:22px/22px 'Liberation Sans', sans-serif;color:#000;letter-spacing:1.397px;white-space:pre;-webkit-text-stroke:0.45px #000;">Evet</div>
<div style="position:absolute;left:1808.70px;top:1233.43px;font:22px/22px 'Liberation Sans', sans-serif;color:#000;letter-spacing:0.650px;white-space:pre;-webkit-text-stroke:0.45px #000;">0</div>
<div style="position:absolute;left:1956.30px;top:1233.43px;font:22px/22px 'Liberation Sans', sans-serif;color:#000;letter-spacing:1.397px;white-space:pre;-webkit-text-stroke:0.45px #000;">Evet</div>
<div style="position:absolute;left:2117.00px;top:1233.43px;font:22px/22px 'Liberation Sans', sans-serif;color:#000;letter-spacing:0.650px;white-space:pre;-webkit-text-stroke:0.45px #000;">0</div>
<div style="position:absolute;left:2279.00px;top:1233.43px;font:22px/22px 'Liberation Sans', sans-serif;color:#000;letter-spacing:2.407px;white-space:pre;-webkit-text-stroke:0.45px #000;">İSG</div>
<div style="position:absolute;left:2460.00px;top:1233.43px;font:22px/22px 'Liberation Sans', sans-serif;color:#000;letter-spacing:1.514px;white-space:pre;-webkit-text-stroke:0.45px #000;">Olay Bildirim</div>
<div style="position:absolute;left:2734.70px;top:1219.73px;font:22px/22px 'Liberation Sans', sans-serif;color:#000;letter-spacing:1.019px;white-space:pre;-webkit-text-stroke:0.45px #000;">İSMAİL MURAT</div>
<div style="position:absolute;left:2735.70px;top:1246.23px;font:22px/22px 'Liberation Sans', sans-serif;color:#000;letter-spacing:0.975px;white-space:pre;-webkit-text-stroke:0.45px #000;">BAYIK</div>
<div style="position:absolute;left:2934px;top:1206.4px;width:79.5px;height:71.29999999999995px;box-sizing:border-box;border:2px solid #898989;background:#f9f9fd;box-shadow:inset 0 0 0 1px #ffffff;"></div>
<div style="position:absolute;left:2934px;top:1277.2px;width:79.5px;height:3.0px;background:#0b0b0b;"></div>
<div style="position:absolute;left:2960.60px;top:1231.88px;font:bold 23px/23px 'Liberation Sans', sans-serif;color:#62626c;letter-spacing:-0.665px;white-space:pre;-webkit-text-stroke:0.6px #62626c;-webkit-text-stroke:0.2px #62626c;">Sil</div>
<div style="position:absolute;left:24px;top:1286.7px;width:109.5px;height:70.79999999999995px;box-sizing:border-box;border:2px solid #898989;background:#f9f9fd;box-shadow:inset 0 0 0 1px #ffffff;"></div>
<div style="position:absolute;left:24px;top:1357px;width:109.5px;height:3px;background:#0b0b0b;"></div>
<div style="position:absolute;left:38.60px;top:1312.43px;font:bold 23px/23px 'Liberation Sans', sans-serif;color:#62626c;letter-spacing:0.752px;white-space:pre;-webkit-text-stroke:0.6px #62626c;-webkit-text-stroke:0.2px #62626c;">İlgililer</div>
<div style="position:absolute;left:152.00px;top:1313.48px;font:22px/22px 'Liberation Sans', sans-serif;color:#000;letter-spacing:2.365px;white-space:pre;-webkit-text-stroke:0.45px #000;">12</div>
<div style="position:absolute;left:341.50px;top:1313.48px;font:22px/22px 'Liberation Sans', sans-serif;color:#000;letter-spacing:1.279px;white-space:pre;-webkit-text-stroke:0.45px #000;">Çalışan ayrıldığında bir ekipte görevli ise uyar</div>
<div style="position:absolute;left:939.00px;top:1313.48px;font:22px/22px 'Liberation Sans', sans-serif;color:#000;letter-spacing:1.385px;white-space:pre;-webkit-text-stroke:0.45px #000;">İşlem Anında</div>
<div style="position:absolute;left:1345.00px;top:1313.48px;font:22px/22px 'Liberation Sans', sans-serif;color:#000;letter-spacing:1.479px;white-space:pre;-webkit-text-stroke:0.45px #000;">İşlem anında</div>
<div style="position:absolute;left:1670.00px;top:1313.48px;font:22px/22px 'Liberation Sans', sans-serif;color:#000;letter-spacing:1.397px;white-space:pre;-webkit-text-stroke:0.45px #000;">Evet</div>
<div style="position:absolute;left:1808.70px;top:1313.48px;font:22px/22px 'Liberation Sans', sans-serif;color:#000;letter-spacing:0.650px;white-space:pre;-webkit-text-stroke:0.45px #000;">0</div>
<div style="position:absolute;left:1956.30px;top:1313.48px;font:22px/22px 'Liberation Sans', sans-serif;color:#000;letter-spacing:1.397px;white-space:pre;-webkit-text-stroke:0.45px #000;">Evet</div>
<div style="position:absolute;left:2117.00px;top:1313.48px;font:22px/22px 'Liberation Sans', sans-serif;color:#000;letter-spacing:0.650px;white-space:pre;-webkit-text-stroke:0.45px #000;">0</div>
<div style="position:absolute;left:2279.00px;top:1313.48px;font:22px/22px 'Liberation Sans', sans-serif;color:#000;letter-spacing:2.407px;white-space:pre;-webkit-text-stroke:0.45px #000;">İSG</div>
<div style="position:absolute;left:2459.00px;top:1313.48px;font:22px/22px 'Liberation Sans', sans-serif;color:#000;letter-spacing:1.371px;white-space:pre;-webkit-text-stroke:0.45px #000;">İş Yeri Ekip Görevli</div>
<div style="position:absolute;left:2734.70px;top:1299.78px;font:22px/22px 'Liberation Sans', sans-serif;color:#000;letter-spacing:1.019px;white-space:pre;-webkit-text-stroke:0.45px #000;">İSMAİL MURAT</div>
<div style="position:absolute;left:2735.70px;top:1326.28px;font:22px/22px 'Liberation Sans', sans-serif;color:#000;letter-spacing:0.975px;white-space:pre;-webkit-text-stroke:0.45px #000;">BAYIK</div>
<div style="position:absolute;left:2934px;top:1286.7px;width:79.5px;height:70.79999999999995px;box-sizing:border-box;border:2px solid #898989;background:#f9f9fd;box-shadow:inset 0 0 0 1px #ffffff;"></div>
<div style="position:absolute;left:2934px;top:1357px;width:79.5px;height:3px;background:#0b0b0b;"></div>
<div style="position:absolute;left:2960.60px;top:1311.93px;font:bold 23px/23px 'Liberation Sans', sans-serif;color:#62626c;letter-spacing:-0.665px;white-space:pre;-webkit-text-stroke:0.6px #62626c;-webkit-text-stroke:0.2px #62626c;">Sil</div>
<div style="position:absolute;left:24px;top:1366.5px;width:109.5px;height:71.29999999999995px;box-sizing:border-box;border:2px solid #898989;background:#f9f9fd;box-shadow:inset 0 0 0 1px #ffffff;"></div>
<div style="position:absolute;left:24px;top:1437.3px;width:109.5px;height:3.0px;background:#0b0b0b;"></div>
<div style="position:absolute;left:38.60px;top:1392.48px;font:bold 23px/23px 'Liberation Sans', sans-serif;color:#62626c;letter-spacing:0.752px;white-space:pre;-webkit-text-stroke:0.6px #62626c;-webkit-text-stroke:0.2px #62626c;">İlgililer</div>
<div style="position:absolute;left:152.00px;top:1393.53px;font:22px/22px 'Liberation Sans', sans-serif;color:#000;letter-spacing:2.365px;white-space:pre;-webkit-text-stroke:0.45px #000;">10</div>
<div style="position:absolute;left:341.50px;top:1393.53px;font:22px/22px 'Liberation Sans', sans-serif;color:#000;letter-spacing:1.260px;white-space:pre;-webkit-text-stroke:0.45px #000;">DF formu açıldığını bildir</div>
<div style="position:absolute;left:939.00px;top:1393.53px;font:22px/22px 'Liberation Sans', sans-serif;color:#000;letter-spacing:1.385px;white-space:pre;-webkit-text-stroke:0.45px #000;">İşlem Anında</div>
<div style="position:absolute;left:1345.00px;top:1393.53px;font:22px/22px 'Liberation Sans', sans-serif;color:#000;letter-spacing:1.479px;white-space:pre;-webkit-text-stroke:0.45px #000;">İşlem anında</div>
<div style="position:absolute;left:1670.00px;top:1393.53px;font:22px/22px 'Liberation Sans', sans-serif;color:#000;letter-spacing:1.397px;white-space:pre;-webkit-text-stroke:0.45px #000;">Evet</div>
<div style="position:absolute;left:1808.70px;top:1393.53px;font:22px/22px 'Liberation Sans', sans-serif;color:#000;letter-spacing:0.650px;white-space:pre;-webkit-text-stroke:0.45px #000;">0</div>
<div style="position:absolute;left:1956.30px;top:1393.53px;font:22px/22px 'Liberation Sans', sans-serif;color:#000;letter-spacing:1.397px;white-space:pre;-webkit-text-stroke:0.45px #000;">Evet</div>
<div style="position:absolute;left:2117.00px;top:1393.53px;font:22px/22px 'Liberation Sans', sans-serif;color:#000;letter-spacing:0.650px;white-space:pre;-webkit-text-stroke:0.45px #000;">0</div>
<div style="position:absolute;left:2279.00px;top:1393.53px;font:22px/22px 'Liberation Sans', sans-serif;color:#000;letter-spacing:2.407px;white-space:pre;-webkit-text-stroke:0.45px #000;">İSG</div>
<div style="position:absolute;left:2460.00px;top:1379.83px;font:22px/22px 'Liberation Sans', sans-serif;color:#000;letter-spacing:1.282px;white-space:pre;-webkit-text-stroke:0.45px #000;">Düzeltici ve Önleyici</div>
<div style="position:absolute;left:2460.00px;top:1406.33px;font:22px/22px 'Liberation Sans', sans-serif;color:#000;letter-spacing:1.224px;white-space:pre;-webkit-text-stroke:0.45px #000;">Faaliyetler</div>
<div style="position:absolute;left:2734.70px;top:1379.83px;font:22px/22px 'Liberation Sans', sans-serif;color:#000;letter-spacing:1.019px;white-space:pre;-webkit-text-stroke:0.45px #000;">İSMAİL MURAT</div>
<div style="position:absolute;left:2735.70px;top:1406.33px;font:22px/22px 'Liberation Sans', sans-serif;color:#000;letter-spacing:0.975px;white-space:pre;-webkit-text-stroke:0.45px #000;">BAYIK</div>
<div style="position:absolute;left:2934px;top:1366.5px;width:79.5px;height:71.29999999999995px;box-sizing:border-box;border:2px solid #898989;background:#f9f9fd;box-shadow:inset 0 0 0 1px #ffffff;"></div>
<div style="position:absolute;left:2934px;top:1437.3px;width:79.5px;height:3.0px;background:#0b0b0b;"></div>
<div style="position:absolute;left:2960.60px;top:1391.98px;font:bold 23px/23px 'Liberation Sans', sans-serif;color:#62626c;letter-spacing:-0.665px;white-space:pre;-webkit-text-stroke:0.6px #62626c;-webkit-text-stroke:0.2px #62626c;">Sil</div>
<div style="position:absolute;left:24px;top:1446.8px;width:109.5px;height:71.29999999999995px;box-sizing:border-box;border:2px solid #898989;background:#f9f9fd;box-shadow:inset 0 0 0 1px #ffffff;"></div>
<div style="position:absolute;left:24px;top:1517.6px;width:109.5px;height:3.0px;background:#0b0b0b;"></div>
<div style="position:absolute;left:38.60px;top:1472.78px;font:bold 23px/23px 'Liberation Sans', sans-serif;color:#62626c;letter-spacing:0.752px;white-space:pre;-webkit-text-stroke:0.6px #62626c;-webkit-text-stroke:0.2px #62626c;">İlgililer</div>
<div style="position:absolute;left:152.00px;top:1473.83px;font:22px/22px 'Liberation Sans', sans-serif;color:#000;letter-spacing:0.768px;white-space:pre;-webkit-text-stroke:0.45px #000;">9</div>
<div style="position:absolute;left:342.50px;top:1460.13px;font:22px/22px 'Liberation Sans', sans-serif;color:#000;letter-spacing:1.432px;white-space:pre;-webkit-text-stroke:0.45px #000;">Yapılamamış ekipman periyodik kontrollerini her ayın</div>
<div style="position:absolute;left:342.50px;top:1486.63px;font:22px/22px 'Liberation Sans', sans-serif;color:#000;letter-spacing:1.543px;white-space:pre;-webkit-text-stroke:0.45px #000;">son gününden n gün önce uyar</div>
<div style="position:absolute;left:940.00px;top:1460.13px;font:22px/22px 'Liberation Sans', sans-serif;color:#000;letter-spacing:1.190px;white-space:pre;-webkit-text-stroke:0.45px #000;">Referans Zamandan Önce</div>
<div style="position:absolute;left:940.00px;top:1486.63px;font:22px/22px 'Liberation Sans', sans-serif;color:#000;letter-spacing:1.864px;white-space:pre;-webkit-text-stroke:0.45px #000;">(Hatırlatma)</div>
<div style="position:absolute;left:1346.00px;top:1473.83px;font:22px/22px 'Liberation Sans', sans-serif;color:#000;letter-spacing:0.757px;white-space:pre;-webkit-text-stroke:0.45px #000;">Her ayın son günü</div>
<div style="position:absolute;left:1670.00px;top:1473.83px;font:22px/22px 'Liberation Sans', sans-serif;color:#000;letter-spacing:1.397px;white-space:pre;-webkit-text-stroke:0.45px #000;">Evet</div>
<div style="position:absolute;left:1808.70px;top:1473.83px;font:22px/22px 'Liberation Sans', sans-serif;color:#000;letter-spacing:0.650px;white-space:pre;-webkit-text-stroke:0.45px #000;">5</div>
<div style="position:absolute;left:1956.30px;top:1473.83px;font:22px/22px 'Liberation Sans', sans-serif;color:#000;letter-spacing:1.397px;white-space:pre;-webkit-text-stroke:0.45px #000;">Evet</div>
<div style="position:absolute;left:2117.00px;top:1473.83px;font:22px/22px 'Liberation Sans', sans-serif;color:#000;letter-spacing:0.650px;white-space:pre;-webkit-text-stroke:0.45px #000;">5</div>
<div style="position:absolute;left:2279.00px;top:1473.83px;font:22px/22px 'Liberation Sans', sans-serif;color:#000;letter-spacing:2.407px;white-space:pre;-webkit-text-stroke:0.45px #000;">İSG</div>
<div style="position:absolute;left:2460.00px;top:1460.13px;font:22px/22px 'Liberation Sans', sans-serif;color:#000;letter-spacing:1.220px;white-space:pre;-webkit-text-stroke:0.45px #000;">Ekipman Periyodik</div>
<div style="position:absolute;left:2460.00px;top:1486.63px;font:22px/22px 'Liberation Sans', sans-serif;color:#000;letter-spacing:1.697px;white-space:pre;-webkit-text-stroke:0.45px #000;">Kontrol</div>
<div style="position:absolute;left:2734.70px;top:1460.13px;font:22px/22px 'Liberation Sans', sans-serif;color:#000;letter-spacing:1.019px;white-space:pre;-webkit-text-stroke:0.45px #000;">İSMAİL MURAT</div>
<div style="position:absolute;left:2735.70px;top:1486.63px;font:22px/22px 'Liberation Sans', sans-serif;color:#000;letter-spacing:0.975px;white-space:pre;-webkit-text-stroke:0.45px #000;">BAYIK</div>
<div style="position:absolute;left:2934px;top:1446.8px;width:79.5px;height:71.29999999999995px;box-sizing:border-box;border:2px solid #898989;background:#f9f9fd;box-shadow:inset 0 0 0 1px #ffffff;"></div>
<div style="position:absolute;left:2934px;top:1517.6px;width:79.5px;height:3.0px;background:#0b0b0b;"></div>
<div style="position:absolute;left:2960.60px;top:1472.28px;font:bold 23px/23px 'Liberation Sans', sans-serif;color:#62626c;letter-spacing:-0.665px;white-space:pre;-webkit-text-stroke:0.6px #62626c;-webkit-text-stroke:0.2px #62626c;">Sil</div>
<div style="position:absolute;left:24px;top:1527.1px;width:109.5px;height:71.10000000000014px;box-sizing:border-box;border:2px solid #898989;background:#f9f9fd;box-shadow:inset 0 0 0 1px #ffffff;"></div>
<div style="position:absolute;left:24px;top:1597.7px;width:109.5px;height:3.0px;background:#0b0b0b;"></div>
<div style="position:absolute;left:38.60px;top:1552.98px;font:bold 23px/23px 'Liberation Sans', sans-serif;color:#62626c;letter-spacing:0.752px;white-space:pre;-webkit-text-stroke:0.6px #62626c;-webkit-text-stroke:0.2px #62626c;">İlgililer</div>
<div style="position:absolute;left:153.00px;top:1554.03px;font:22px/22px 'Liberation Sans', sans-serif;color:#000;letter-spacing:0.650px;white-space:pre;-webkit-text-stroke:0.45px #000;">8</div>
<div style="position:absolute;left:342.50px;top:1540.33px;font:22px/22px 'Liberation Sans', sans-serif;color:#000;letter-spacing:1.392px;white-space:pre;-webkit-text-stroke:0.45px #000;">Yapılacak ekipman periyodik kontrollerini her ayın ilk</div>
<div style="position:absolute;left:342.50px;top:1566.83px;font:22px/22px 'Liberation Sans', sans-serif;color:#000;letter-spacing:1.567px;white-space:pre;-webkit-text-stroke:0.45px #000;">günü hatırlat</div>
<div style="position:absolute;left:940.00px;top:1540.33px;font:22px/22px 'Liberation Sans', sans-serif;color:#000;letter-spacing:1.190px;white-space:pre;-webkit-text-stroke:0.45px #000;">Referans Zamandan Önce</div>
<div style="position:absolute;left:940.00px;top:1566.83px;font:22px/22px 'Liberation Sans', sans-serif;color:#000;letter-spacing:1.864px;white-space:pre;-webkit-text-stroke:0.45px #000;">(Hatırlatma)</div>
<div style="position:absolute;left:1346.00px;top:1554.03px;font:22px/22px 'Liberation Sans', sans-serif;color:#000;letter-spacing:1.509px;white-space:pre;-webkit-text-stroke:0.45px #000;">Her ayın ilk günü</div>
<div style="position:absolute;left:1670.00px;top:1554.03px;font:22px/22px 'Liberation Sans', sans-serif;color:#000;letter-spacing:1.397px;white-space:pre;-webkit-text-stroke:0.45px #000;">Evet</div>
<div style="position:absolute;left:1808.70px;top:1554.03px;font:22px/22px 'Liberation Sans', sans-serif;color:#000;letter-spacing:0.650px;white-space:pre;-webkit-text-stroke:0.45px #000;">0</div>
<div style="position:absolute;left:1956.30px;top:1554.03px;font:22px/22px 'Liberation Sans', sans-serif;color:#000;letter-spacing:1.397px;white-space:pre;-webkit-text-stroke:0.45px #000;">Evet</div>
<div style="position:absolute;left:2117.00px;top:1554.03px;font:22px/22px 'Liberation Sans', sans-serif;color:#000;letter-spacing:0.650px;white-space:pre;-webkit-text-stroke:0.45px #000;">0</div>
<div style="position:absolute;left:2279.00px;top:1554.03px;font:22px/22px 'Liberation Sans', sans-serif;color:#000;letter-spacing:2.407px;white-space:pre;-webkit-text-stroke:0.45px #000;">İSG</div>
<div style="position:absolute;left:2460.00px;top:1540.33px;font:22px/22px 'Liberation Sans', sans-serif;color:#000;letter-spacing:1.220px;white-space:pre;-webkit-text-stroke:0.45px #000;">Ekipman Periyodik</div>
<div style="position:absolute;left:2460.00px;top:1566.83px;font:22px/22px 'Liberation Sans', sans-serif;color:#000;letter-spacing:1.697px;white-space:pre;-webkit-text-stroke:0.45px #000;">Kontrol</div>
<div style="position:absolute;left:2734.70px;top:1540.33px;font:22px/22px 'Liberation Sans', sans-serif;color:#000;letter-spacing:1.019px;white-space:pre;-webkit-text-stroke:0.45px #000;">İSMAİL MURAT</div>
<div style="position:absolute;left:2735.70px;top:1566.83px;font:22px/22px 'Liberation Sans', sans-serif;color:#000;letter-spacing:0.975px;white-space:pre;-webkit-text-stroke:0.45px #000;">BAYIK</div>
<div style="position:absolute;left:2934px;top:1527.1px;width:79.5px;height:71.10000000000014px;box-sizing:border-box;border:2px solid #898989;background:#f9f9fd;box-shadow:inset 0 0 0 1px #ffffff;"></div>
<div style="position:absolute;left:2934px;top:1597.7px;width:79.5px;height:3.0px;background:#0b0b0b;"></div>
<div style="position:absolute;left:2960.60px;top:1552.48px;font:bold 23px/23px 'Liberation Sans', sans-serif;color:#62626c;letter-spacing:-0.665px;white-space:pre;-webkit-text-stroke:0.6px #62626c;-webkit-text-stroke:0.2px #62626c;">Sil</div>
</div>
<div style="position:absolute;left:3027.5px;top:480px;width:29.5px;height:1094px;background:#fafafa;"></div>
<div style="position:absolute;left:3056px;top:472px;width:2px;height:1102px;background:#ececec;"></div>
<div style="position:absolute;left:3036px;top:486px;width:16px;height:862px;background:#c1c1c1;border-radius:8px;"></div>
<svg style="position:absolute;left:0;top:0" width="3072" height="1586" viewBox="0 0 3072 1586"><path d="M1490 387 L1664 646" fill="none" stroke="#76f24c" stroke-width="9.5" stroke-linecap="round"/><path d="M1669 653 L1660 597 M1669 653 L1621 626" fill="none" stroke="#76f24c" stroke-width="8" stroke-linecap="round"/><path d="M1669 654 L1662 622 L1641 633 Z" fill="#76f24c" stroke="#76f24c" stroke-width="6" stroke-linejoin="round"/><ellipse cx="1709.5" cy="680" rx="81" ry="66" fill="none" stroke="#76f24c" stroke-width="9"/><path d="M2907 1224.5 L2916.5 1243.5 L2897.5 1243.5 Z" fill="#76f24c"/></svg>
</body></html>
